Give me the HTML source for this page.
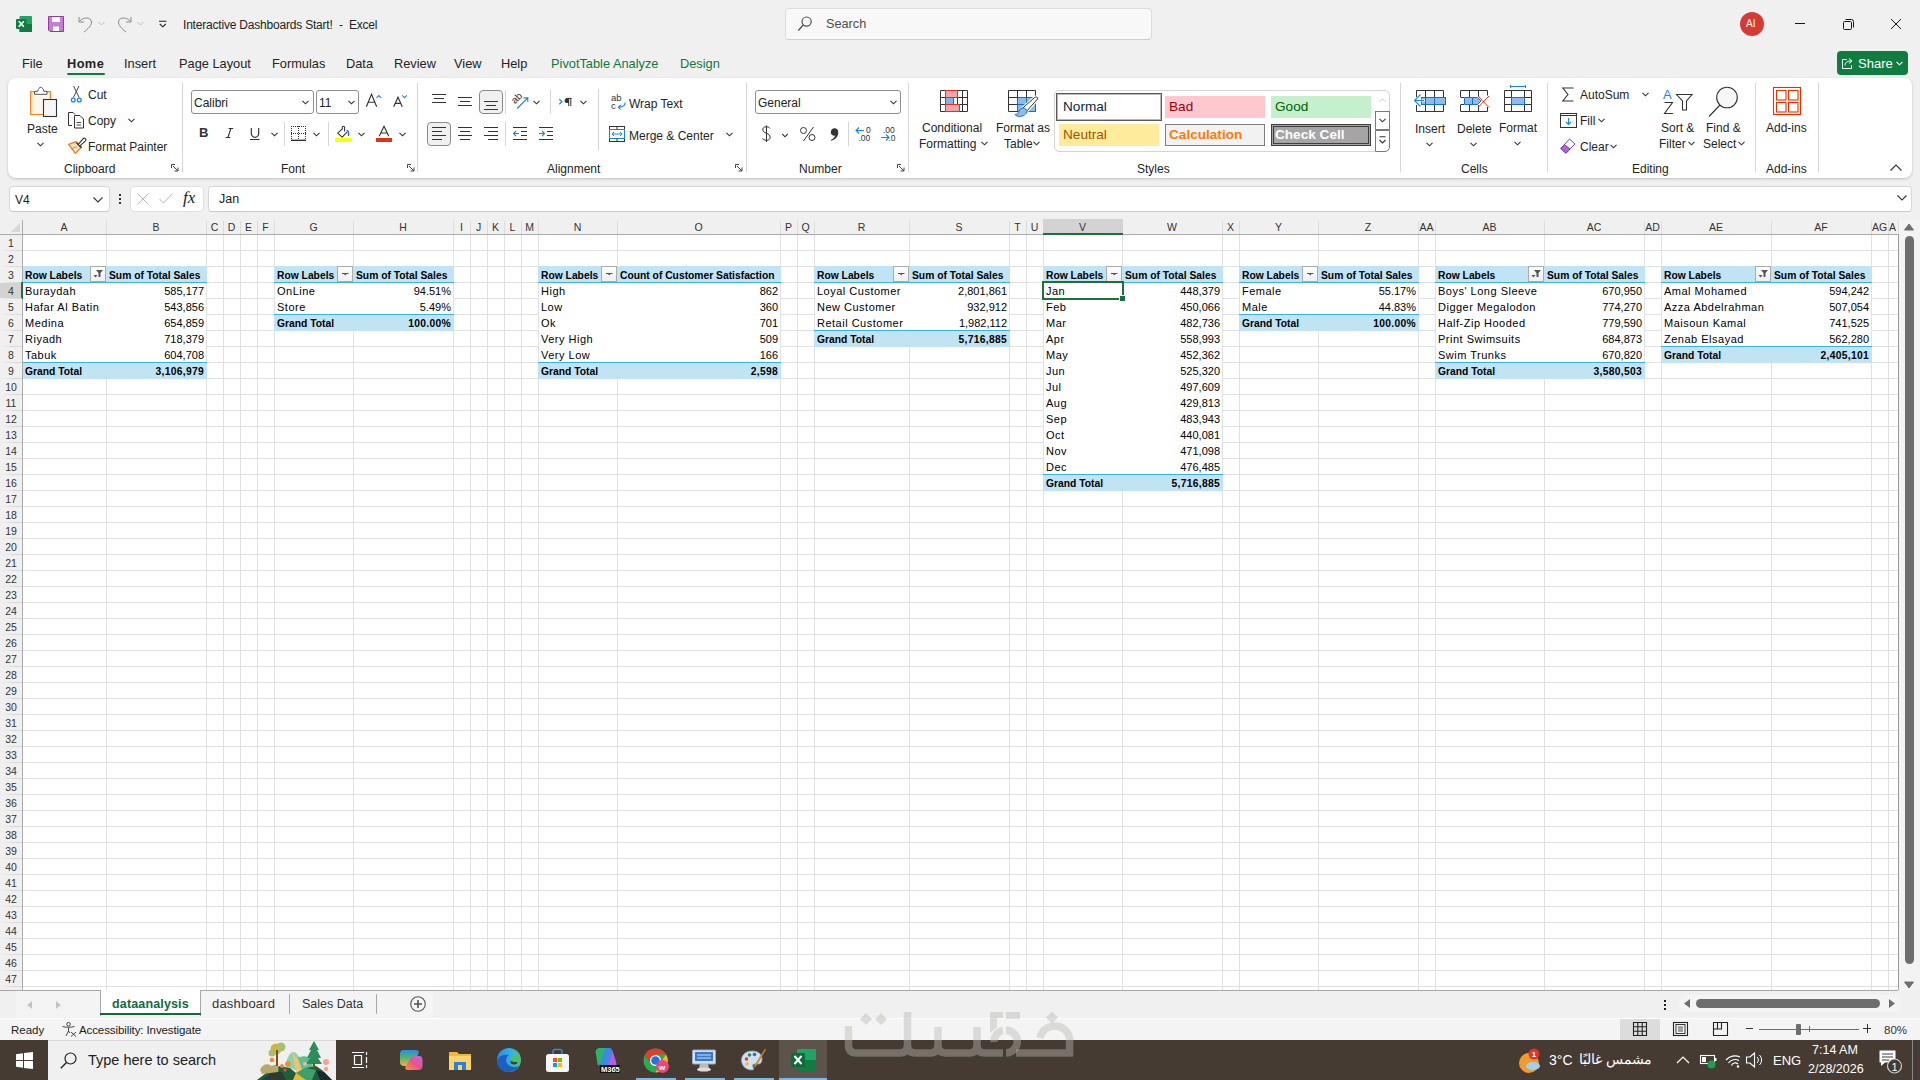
<!DOCTYPE html>
<html><head><meta charset="utf-8"><title>Excel</title>
<style>
*{box-sizing:border-box;margin:0;padding:0}
html,body{width:1920px;height:1080px;overflow:hidden;background:#f0f0f0;font-family:"Liberation Sans",sans-serif;color:#242424}
#root{position:relative;width:1920px;height:1080px;overflow:hidden}
.a{position:absolute}
.t{position:absolute;white-space:nowrap;line-height:1}
svg{position:absolute;overflow:visible}
.ch{font-size:10.5px;color:#333;text-align:center;overflow:hidden}
.rh{font-size:10.5px;color:#333;text-align:center}
.cr{font-size:11px;color:#000;letter-spacing:0.5px}
.cb{font-size:10.3px;font-weight:700;color:#000}
.nr{text-align:right;letter-spacing:0}
.bn{letter-spacing:0.3px}

</style></head><body>
<div id="root">
<!-- title bar -->
<svg style="left:16px;top:16px" width="16" height="16" viewBox="0 0 16 16">
  <rect x="3.5" y="0" width="12.5" height="16" rx="1" fill="#21a366"/>
  <rect x="3.5" y="8" width="12.5" height="8" fill="#107c41"/>
  <rect x="0" y="3" width="10.5" height="10" rx="1" fill="#107c41"/>
  <path d="M2.8 5.2 L7.8 10.8 M7.8 5.2 L2.8 10.8" stroke="#fff" stroke-width="1.7"/>
</svg>
<svg style="left:48px;top:16px" width="16" height="16" viewBox="0 0 16 16">
  <path d="M0.5 0.5 H15.5 V15.5 H2 L0.5 14 Z" fill="#c77ed6" stroke="#8e3b9e" stroke-width="1"/>
  <rect x="4" y="1" width="8" height="5" fill="#fff"/>
  <rect x="5" y="10.5" width="6" height="4.5" fill="#fff"/>
</svg>
<svg style="left:78px;top:16px" width="16" height="16" viewBox="0 0 16 16">
  <path d="M1 1 V6 H6 M1.5 5.5 C4 1.5 13 0 13.5 6 C13.8 9 10 13 6 16" fill="none" stroke="#8a8a8a" stroke-width="1"/>
</svg>
<svg style="left:98px;top:21px" width="7" height="5" viewBox="0 0 7 5"><path d="M0.5 1 L3.5 4 L6.5 1" fill="none" stroke="#bdbdbd" stroke-width="1"/></svg>
<svg style="left:117px;top:16px" width="16" height="16" viewBox="0 0 16 16">
  <path d="M14 1 V6 H9 M13.5 5.5 C11 1.5 2 0 1.5 6 C1.2 9 5 13 9 16" fill="none" stroke="#8a8a8a" stroke-width="1"/>
</svg>
<svg style="left:137px;top:21px" width="7" height="5" viewBox="0 0 7 5"><path d="M0.5 1 L3.5 4 L6.5 1" fill="none" stroke="#bdbdbd" stroke-width="1"/></svg>
<svg style="left:159px;top:20px" width="8" height="8" viewBox="0 0 8 8"><path d="M0 1.2 H7.5 M0.8 4 L3.75 6.8 L6.7 4" fill="none" stroke="#242424" stroke-width="1.1"/></svg>
<div class="t" style="left:183px;top:19px;font-size:12px;color:#242424;letter-spacing:-0.2px">Interactive Dashboards Start!&nbsp;&nbsp;-&nbsp;&nbsp;Excel</div>
<!-- search -->
<div class="a" style="left:785px;top:8px;width:367px;height:32px;background:#f8f8f8;border:1px solid #dcdcdc;border-radius:4px;border-bottom-color:#cfcfcf"></div>
<svg style="left:796px;top:15px" width="18" height="18" viewBox="796 15 18 18"><circle cx="806.6" cy="21.6" r="4.6" fill="none" stroke="#505050" stroke-width="1.2"/><path d="M803.3 25 L798.3 30.5" stroke="#505050" stroke-width="1.3"/></svg>
<div class="t" style="left:826px;top:18px;font-size:12.7px;color:#4d4d4d">Search</div>
<!-- avatar & window controls -->
<div class="a" style="left:1740px;top:12px;width:24px;height:24px;border-radius:50%;background:#d53a35"></div>
<div class="t" style="left:1746px;top:19px;font-size:10px;color:#fff">AI</div>
<div class="a" style="left:1795px;top:23px;width:10px;height:1px;background:#1a1a1a"></div>
<svg style="left:1843px;top:19px" width="11" height="11" viewBox="0 0 11 11"><rect x="0.5" y="2.5" width="8" height="8" rx="1.2" fill="none" stroke="#1a1a1a" stroke-width="1"/><path d="M2.5 0.5 H8.5 A2 2 0 0 1 10.5 2.5 V8.5" fill="none" stroke="#1a1a1a" stroke-width="1"/></svg>
<svg style="left:1891px;top:19px" width="10" height="10" viewBox="0 0 10 10"><path d="M0 0 L10 10 M10 0 L0 10" stroke="#1a1a1a" stroke-width="1"/></svg>
<!-- tabs -->
<div class="t" style="left:22px;top:58px;font-size:12.8px">File</div>
<div class="t" style="left:67px;top:58px;font-size:12.8px;font-weight:700;letter-spacing:0.4px">Home</div>
<div class="a" style="left:67px;top:73px;width:38px;height:2px;border-radius:1px;background:#107c41"></div>
<div class="t" style="left:124px;top:58px;font-size:12.8px">Insert</div>
<div class="t" style="left:179px;top:58px;font-size:12.8px">Page Layout</div>
<div class="t" style="left:272px;top:58px;font-size:12.8px">Formulas</div>
<div class="t" style="left:346px;top:58px;font-size:12.8px">Data</div>
<div class="t" style="left:394px;top:58px;font-size:12.8px">Review</div>
<div class="t" style="left:454px;top:58px;font-size:12.8px">View</div>
<div class="t" style="left:501px;top:58px;font-size:12.8px">Help</div>
<div class="t" style="left:551px;top:58px;font-size:12.8px;color:#0e7a3b">PivotTable Analyze</div>
<div class="t" style="left:680px;top:58px;font-size:12.8px;color:#0e7a3b">Design</div>
<!-- share -->
<div class="a" style="left:1837px;top:51px;width:71px;height:24px;border-radius:4px;background:#117c3f"></div>
<svg style="left:1842px;top:57px" width="12" height="12" viewBox="0 0 12 12"><path d="M5 2.5 H0.5 V11.5 H9.5 V8" fill="none" stroke="#fff" stroke-width="1"/><path d="M3 8.5 C3 5 6 4 9 4 M7 1.5 L10 4 L7 6.5" fill="none" stroke="#fff" stroke-width="1"/></svg>
<div class="t" style="left:1858px;top:57px;font-size:13px;color:#fff">Share</div>
<svg style="left:1896px;top:61px" width="7" height="5" viewBox="0 0 7 5"><path d="M0.5 0.8 L3.5 3.8 L6.5 0.8" fill="none" stroke="#fff" stroke-width="1.1"/></svg>

<!-- ribbon panel -->
<div class="a" style="left:8px;top:78px;width:1904px;height:100px;background:#fff;border-radius:8px;box-shadow:0 1px 3px rgba(0,0,0,0.2)"></div>
<!-- separators -->
<div class="a" style="left:182px;top:83px;width:1px;height:89px;background:#d6d6d6"></div>
<div class="a" style="left:417px;top:83px;width:1px;height:89px;background:#d6d6d6"></div>
<div class="a" style="left:746px;top:83px;width:1px;height:89px;background:#d6d6d6"></div>
<div class="a" style="left:908px;top:83px;width:1px;height:89px;background:#d6d6d6"></div>
<div class="a" style="left:1400px;top:83px;width:1px;height:89px;background:#d6d6d6"></div>
<div class="a" style="left:1547px;top:83px;width:1px;height:89px;background:#d6d6d6"></div>
<div class="a" style="left:1755px;top:83px;width:1px;height:89px;background:#d6d6d6"></div>
<div class="a" style="left:1818px;top:83px;width:1px;height:89px;background:#d6d6d6"></div>
<!-- group labels -->
<div class="t" style="left:64px;top:163px;font-size:12px">Clipboard</div>
<div class="t" style="left:281px;top:163px;font-size:12px">Font</div>
<div class="t" style="left:547px;top:163px;font-size:12px">Alignment</div>
<div class="t" style="left:799px;top:163px;font-size:12px">Number</div>
<div class="t" style="left:1137px;top:163px;font-size:12px">Styles</div>
<div class="t" style="left:1461px;top:163px;font-size:12px">Cells</div>
<div class="t" style="left:1632px;top:163px;font-size:12px">Editing</div>
<div class="t" style="left:1766px;top:163px;font-size:12px">Add-ins</div>
<!-- dialog launchers -->
<svg style="left:171px;top:164px" width="8" height="8" viewBox="0 0 8 8"><path d="M0.5 4 V0.5 H4 M2 2 L7 7 M7 3.5 V7 H3.5" fill="none" stroke="#444" stroke-width="1"/></svg>
<svg style="left:407px;top:164px" width="8" height="8" viewBox="0 0 8 8"><path d="M0.5 4 V0.5 H4 M2 2 L7 7 M7 3.5 V7 H3.5" fill="none" stroke="#444" stroke-width="1"/></svg>
<svg style="left:735px;top:164px" width="8" height="8" viewBox="0 0 8 8"><path d="M0.5 4 V0.5 H4 M2 2 L7 7 M7 3.5 V7 H3.5" fill="none" stroke="#444" stroke-width="1"/></svg>
<svg style="left:897px;top:164px" width="8" height="8" viewBox="0 0 8 8"><path d="M0.5 4 V0.5 H4 M2 2 L7 7 M7 3.5 V7 H3.5" fill="none" stroke="#444" stroke-width="1"/></svg>

<!-- CLIPBOARD -->
<svg style="left:28px;top:85px" width="32" height="34" viewBox="28 85 32 34">
  <path d="M43.5 114.5 H30.6 V91.6 H50.4 V99" fill="#fdf6ea" stroke="#f08a1c" stroke-width="1.2"/>
  <path d="M32 113 V93 H49" fill="none" stroke="#fcd9a8" stroke-width="1"/>
  <path d="M34.5 94.3 V91.3 H37.8 C38.3 88.5 39.5 87.3 40.8 87.3 C42.1 87.3 43.3 88.5 43.8 91.3 H47 V94.3 Z" fill="#fff" stroke="#555" stroke-width="1"/>
  <rect x="43.5" y="99.5" width="13" height="17" fill="#f6f6f6" stroke="#333" stroke-width="1.1"/>
</svg>
<div class="t" style="left:27px;top:123px;font-size:12px">Paste</div>
<svg style="left:37px;top:142px" width="7" height="5" viewBox="0 0 7 5"><path d="M0.5 0.8 L3.5 3.8 L6.5 0.8" fill="none" stroke="#333" stroke-width="1.1"/></svg>
<svg style="left:69px;top:85px" width="14" height="19" viewBox="69 85 14 19">
  <path d="M73.6 86 L79.2 97.6 M79 86 L73.4 97.6" stroke="#444" stroke-width="1"/>
  <circle cx="73.3" cy="100" r="1.9" fill="none" stroke="#1a86d9" stroke-width="1.3"/><circle cx="79.3" cy="100" r="1.9" fill="none" stroke="#1a86d9" stroke-width="1.3"/>
</svg>
<div class="t" style="left:88px;top:89px;font-size:12px">Cut</div>
<svg style="left:68px;top:112px" width="17" height="17" viewBox="0 0 17 17">
  <path d="M4 13.5 H0.5 V0.5 H5 L7 2.5" fill="none" stroke="#333" stroke-width="1"/>
  <path d="M6.5 16 V3.5 H12 L15.5 7 V16 Z" fill="#fff" stroke="#333" stroke-width="1"/>
  <path d="M8.5 10.5 H13 M8.5 13 H13" stroke="#333" stroke-width="0.9"/>
</svg>
<div class="t" style="left:88px;top:115px;font-size:12px">Copy</div>
<svg style="left:128px;top:118px" width="7" height="5" viewBox="0 0 7 5"><path d="M0.5 0.8 L3.5 3.8 L6.5 0.8" fill="none" stroke="#333" stroke-width="1.1"/></svg>
<svg style="left:67px;top:136px" width="20" height="19" viewBox="67 136 20 19">
  <path d="M68.6 144.4 L76.4 141.6 L81.4 147 L75.4 153.4 Z" fill="#fde3c5" stroke="#e8791f" stroke-width="1.2" stroke-linejoin="round"/>
  <path d="M71.5 148.8 L76.8 146.6" stroke="#e8791f" stroke-width="1"/>
  <path d="M78 144.6 L83.2 138.6 C83.7 138 84.5 138 85 138.5 L85.6 139.1 C86.1 139.6 86.1 140.4 85.5 140.9 L79.6 146.2" fill="#fff" stroke="#333" stroke-width="1.1"/>
  <path d="M76.2 142.6 L81.4 147.8" stroke="#333" stroke-width="1.3"/>
</svg>
<div class="t" style="left:88px;top:141px;font-size:12px">Format Painter</div>

<!-- FONT -->
<div class="a" style="left:191px;top:90px;width:123px;height:24px;border:1px solid #8f8f8f;border-radius:3px"></div>
<div class="t" style="left:194px;top:97px;font-size:12px;color:#222">Calibri</div>
<svg style="left:302px;top:100px" width="7" height="5" viewBox="0 0 7 5"><path d="M0.5 0.8 L3.5 3.8 L6.5 0.8" fill="none" stroke="#333" stroke-width="1.1"/></svg>
<div class="a" style="left:316px;top:90px;width:43px;height:24px;border:1px solid #8f8f8f;border-radius:3px"></div>
<div class="t" style="left:319px;top:97px;font-size:12px;color:#222">11</div>
<svg style="left:348px;top:100px" width="7" height="5" viewBox="0 0 7 5"><path d="M0.5 0.8 L3.5 3.8 L6.5 0.8" fill="none" stroke="#333" stroke-width="1.1"/></svg>
<svg style="left:362px;top:90px" width="50" height="20" viewBox="362 90 50 20">
  <path d="M366.3 106.8 L371.5 94.3 L376.7 106.8 M368.2 102.2 H374.8" fill="none" stroke="#333" stroke-width="1.15"/>
  <path d="M376.5 97.8 L378.8 95.5 L381.1 97.8" fill="none" stroke="#1a86d9" stroke-width="1.1"/>
  <path d="M393.7 106.8 L398 97.2 L402.3 106.8 M395.2 103.3 H400.8" fill="none" stroke="#333" stroke-width="1.15"/>
  <path d="M402.2 95.3 L404.5 97.6 L406.8 95.3" fill="none" stroke="#1a86d9" stroke-width="1.1"/>
</svg>
<div class="t" style="left:199px;top:126px;font-size:13px;font-weight:700;color:#333">B</div>
<svg style="left:222px;top:125px" width="40" height="17" viewBox="222 125 40 17">
  <path d="M228.6 128.5 H233.2 M225.6 137.5 H230.2 M230.9 128.5 L227.9 137.5" fill="none" stroke="#333" stroke-width="1.1"/>
  <path d="M251.3 128 V133.6 A3.7 3.7 0 0 0 258.7 133.6 V128" fill="none" stroke="#333" stroke-width="1.15"/>
  <path d="M250 139.5 H259.5" stroke="#333" stroke-width="1"/>
</svg>
<svg style="left:271px;top:132px" width="7" height="5" viewBox="0 0 7 5"><path d="M0.5 0.8 L3.5 3.8 L6.5 0.8" fill="none" stroke="#333" stroke-width="1.1"/></svg>
<div class="a" style="left:284px;top:122px;width:1px;height:24px;background:#d6d6d6"></div>
<svg style="left:290px;top:125px" width="18" height="17" viewBox="290 125 18 17">
  <path d="M291 126.5 H306 M291 133.5 H306 M291.5 126 V140 M298.5 126 V140 M305.5 126 V140" fill="none" stroke="#333" stroke-width="1" stroke-dasharray="1 1"/>
  <path d="M291 140.3 H306" stroke="#222" stroke-width="1.3"/>
</svg>
<svg style="left:313px;top:132px" width="7" height="5" viewBox="0 0 7 5"><path d="M0.5 0.8 L3.5 3.8 L6.5 0.8" fill="none" stroke="#333" stroke-width="1.1"/></svg>
<div class="a" style="left:328px;top:122px;width:1px;height:24px;background:#d6d6d6"></div>
<svg style="left:334px;top:124px" width="18" height="19" viewBox="334 124 18 19">
  <path d="M344.6 131.6 V127.4 A1.15 1.15 0 0 0 342.3 127.4 V128.9 L337.7 133.2 L342.2 137.2 L347 132.2" fill="none" stroke="#333" stroke-width="1.1" stroke-linejoin="round"/>
  <path d="M346.6 130.2 C348.3 130.6 348.9 132.6 348.5 135.8" fill="none" stroke="#1a6fd0" stroke-width="1.5"/>
  <rect x="335" y="137.8" width="16" height="4.2" fill="#ffff00"/>
</svg>
<svg style="left:358px;top:132px" width="7" height="5" viewBox="0 0 7 5"><path d="M0.5 0.8 L3.5 3.8 L6.5 0.8" fill="none" stroke="#333" stroke-width="1.1"/></svg>
<svg style="left:376px;top:124px" width="16" height="14" viewBox="376 124 16 14"><path d="M379.2 136.3 L384 126.3 L388.8 136.3 M380.8 133 H387.2" fill="none" stroke="#333" stroke-width="1.15"/></svg>
<div class="a" style="left:376px;top:138px;width:16px;height:4px;background:#e0311b"></div>
<svg style="left:399px;top:132px" width="7" height="5" viewBox="0 0 7 5"><path d="M0.5 0.8 L3.5 3.8 L6.5 0.8" fill="none" stroke="#333" stroke-width="1.1"/></svg>

<!-- ALIGNMENT -->
<svg style="left:432px;top:93px" width="15" height="11" viewBox="0 0 15 11"><path d="M0 1.5 H14 M2 5.5 H12 M0 9.5 H14" stroke="#333" stroke-width="1"/></svg>
<svg style="left:458px;top:96px" width="15" height="11" viewBox="0 0 15 11"><path d="M0 1.5 H14 M2 5.5 H12 M0 9.5 H14" stroke="#333" stroke-width="1"/></svg>
<div class="a" style="left:479px;top:90px;width:24px;height:24px;border:1px solid #8a8a8a;border-radius:4px;background:#f0f0f0"></div>
<svg style="left:484px;top:100px" width="15" height="11" viewBox="0 0 15 11"><path d="M0 1.5 H14 M2 5.5 H12 M0 9.5 H14" stroke="#333" stroke-width="1"/></svg>
<div class="a" style="left:505px;top:90px;width:1px;height:24px;background:#d6d6d6"></div>
<svg style="left:508px;top:90px" width="24" height="22" viewBox="508 90 24 22">
  <text x="512.2" y="101.5" font-size="10" fill="#333" font-family="Liberation Sans" transform="rotate(-45 517 99.5)">ab</text>
  <path d="M517.2 108.5 L527.8 97.9 M523.6 97.9 H527.8 V102.1" fill="none" stroke="#1a86d9" stroke-width="1.1"/>
</svg>
<svg style="left:533px;top:100px" width="7" height="5" viewBox="0 0 7 5"><path d="M0.5 0.8 L3.5 3.8 L6.5 0.8" fill="none" stroke="#333" stroke-width="1.1"/></svg>
<div class="a" style="left:550px;top:90px;width:1px;height:24px;background:#d6d6d6"></div>
<svg style="left:556px;top:96px" width="18" height="12" viewBox="556 96 18 12">
  <path d="M559.3 99.2 L562 101.7 L559.3 104.2" fill="none" stroke="#1a86d9" stroke-width="1.2"/>
  <path d="M565.8 98.4 H571.5 M568.7 98.4 V106 M570.8 98.4 V106" fill="none" stroke="#333" stroke-width="1"/>
  <path d="M568.7 98.4 H566.8 A2.3 2.3 0 0 0 566.8 103 H568.7 Z" fill="#333"/>
</svg>
<svg style="left:580px;top:100px" width="7" height="5" viewBox="0 0 7 5"><path d="M0.5 0.8 L3.5 3.8 L6.5 0.8" fill="none" stroke="#333" stroke-width="1.1"/></svg>
<div class="a" style="left:598px;top:89px;width:1px;height:61px;background:#d6d6d6"></div>
<div class="a" style="left:427px;top:122px;width:24px;height:24px;border:1px solid #8a8a8a;border-radius:4px;background:#f0f0f0"></div>
<svg style="left:432px;top:127px" width="15" height="14" viewBox="0 0 15 14"><path d="M0 0.5 H14 M0 4.5 H10 M0 8.5 H14 M0 12.5 H10" stroke="#333" stroke-width="1"/></svg>
<svg style="left:458px;top:127px" width="15" height="14" viewBox="0 0 15 14"><path d="M0 0.5 H14 M2 4.5 H12 M0 8.5 H14 M2 12.5 H12" stroke="#333" stroke-width="1"/></svg>
<svg style="left:484px;top:127px" width="15" height="14" viewBox="0 0 15 14"><path d="M0 0.5 H14 M4 4.5 H14 M0 8.5 H14 M4 12.5 H14" stroke="#333" stroke-width="1"/></svg>
<div class="a" style="left:505px;top:122px;width:1px;height:24px;background:#d6d6d6"></div>
<svg style="left:513px;top:127px" width="15" height="14" viewBox="0 0 15 14"><path d="M0 0.5 H14 M8 4.5 H14 M8 8.5 H14 M0 12.5 H14" stroke="#333" stroke-width="1"/><path d="M6 6.5 H0.5 M3 4 L0.5 6.5 L3 9" fill="none" stroke="#1a86d9" stroke-width="1.1"/></svg>
<svg style="left:539px;top:127px" width="15" height="14" viewBox="0 0 15 14"><path d="M0 0.5 H14 M8 4.5 H14 M8 8.5 H14 M0 12.5 H14" stroke="#333" stroke-width="1"/><path d="M0 6.5 H5.5 M3 4 L5.5 6.5 L3 9" fill="none" stroke="#1a86d9" stroke-width="1.1"/></svg>
<svg style="left:609px;top:92px" width="18" height="19" viewBox="609 92 18 19">
  <text x="611" y="101.3" font-size="9.5" fill="#333" font-family="Liberation Sans">ab</text>
  <text x="611" y="108.8" font-size="9.5" fill="#333" font-family="Liberation Sans">c</text>
  <path d="M625 102.5 C625.5 105.5 623 107 619 107.3 M620.8 105 L618.4 107.3 L620.8 109.6" fill="none" stroke="#1a86d9" stroke-width="1.1"/>
</svg>
<div class="t" style="left:629px;top:98px;font-size:12px">Wrap Text</div>
<svg style="left:609px;top:126px" width="16" height="16" viewBox="0 0 16 16">
  <rect x="0.5" y="0.5" width="15" height="15" fill="#fff" stroke="#333" stroke-width="1"/>
  <rect x="0.5" y="3.5" width="15" height="9" fill="#fff" stroke="#1a86d9" stroke-width="1"/>
  <path d="M8 0.5 V3.5 M8 12.5 V15.5" stroke="#333"/>
  <path d="M3 8 H13 M5 6 L3 8 L5 10 M11 6 L13 8 L11 10" fill="none" stroke="#1a86d9" stroke-width="1"/>
</svg>
<div class="t" style="left:629px;top:130px;font-size:12px">Merge &amp; Center</div>
<svg style="left:726px;top:132px" width="7" height="5" viewBox="0 0 7 5"><path d="M0.5 0.8 L3.5 3.8 L6.5 0.8" fill="none" stroke="#333" stroke-width="1.1"/></svg>

<!-- NUMBER -->
<div class="a" style="left:755px;top:90px;width:146px;height:24px;border:1px solid #8f8f8f;border-radius:3px"></div>
<div class="t" style="left:758px;top:97px;font-size:12px;color:#222">General</div>
<svg style="left:890px;top:100px" width="7" height="5" viewBox="0 0 7 5"><path d="M0.5 0.8 L3.5 3.8 L6.5 0.8" fill="none" stroke="#333" stroke-width="1.1"/></svg>
<svg style="left:755px;top:120px" width="150" height="28" viewBox="755 120 150 28">
  <path d="M770 128.5 C769 127 767.5 126.8 766 126.8 C763.5 126.8 762.5 128.5 762.8 130.2 C763.3 132.5 766.5 133 768 134 C770 135 770.5 136.8 770 138.3 C769.3 140 767.5 140.5 766 140.3 C764.5 140.2 763.5 139.5 762.5 138.5 M766.5 125.5 V142" fill="none" stroke="#333" stroke-width="1"/>
  <path d="M782.3 134 L785 136.8 L787.7 134" fill="none" stroke="#333" stroke-width="1.1"/>
  <circle cx="803.5" cy="130.5" r="3" fill="none" stroke="#333" stroke-width="1"/><circle cx="812" cy="137.5" r="3" fill="none" stroke="#333" stroke-width="1"/><path d="M813.5 127 L803.5 141" stroke="#333" stroke-width="1"/>
  <path d="M834.5 128.3 C837 128.3 838.3 130.2 838.3 132.5 C838.3 136.5 835.5 139.5 831.2 140.8 L830.8 140 C833.5 138.8 834.8 137.2 835 135.8 C832.5 136 830.8 134.5 830.8 132.2 C830.8 130 832.3 128.3 834.5 128.3 Z" fill="#333"/>
  <path d="M864 130.5 H856 M859 127.5 L856 130.5 L859 133.5" fill="none" stroke="#1a86d9" stroke-width="1.1"/>
  <text x="866" y="133" font-size="8.5" fill="#333" font-family="Liberation Sans">0</text>
  <text x="858.5" y="141" font-size="8.5" fill="#333" font-family="Liberation Sans">.00</text>
  <text x="883" y="133" font-size="8.5" fill="#333" font-family="Liberation Sans">.00</text>
  <path d="M881 137.5 H889 M886 134.5 L889 137.5 L886 140.5" fill="none" stroke="#1a86d9" stroke-width="1.1"/>
  <text x="888.5" y="141" font-size="8.5" fill="#333" font-family="Liberation Sans">.0</text>
</svg>
<div class="a" style="left:848px;top:122px;width:1px;height:24px;background:#d6d6d6"></div>

<!-- STYLES -->
<svg style="left:938px;top:88px" width="32" height="26" viewBox="938 88 32 26">
  <path d="M940.5 90.5 H967.5 V111.5 H940.5 Z M940.5 97.5 H967.5 M940.5 104.5 H967.5 M945.5 90.5 V111.5 M957.5 90.5 V104.5 M962.5 90.5 V111.5 M959.5 104.5 V111.5" fill="none" stroke="#333" stroke-width="1"/>
  <rect x="945.5" y="90.5" width="12" height="7" fill="#f5a3a3" stroke="#e0302a" stroke-width="1"/>
  <rect x="945.5" y="97.5" width="8" height="7" fill="#7fb5ea" stroke="#1a6fc4" stroke-width="1"/>
  <rect x="945.5" y="104.5" width="14" height="7" fill="#f5a3a3" stroke="#e0302a" stroke-width="1"/>
</svg>
<div class="t" style="left:922px;top:122px;font-size:12px">Conditional</div>
<div class="t" style="left:919px;top:138px;font-size:12px">Formatting</div>
<svg style="left:981px;top:141px" width="7" height="5" viewBox="0 0 7 5"><path d="M0.5 0.8 L3.5 3.8 L6.5 0.8" fill="none" stroke="#333" stroke-width="1.1"/></svg>
<svg style="left:1006px;top:88px" width="34" height="31" viewBox="1006 88 34 31">
  <rect x="1017.5" y="97.5" width="18" height="14" fill="#8dbcec" stroke="#1a6fc4" stroke-width="1"/>
  <path d="M1026.5 97.5 V104.5 M1017.5 104.5 H1035.5" stroke="#1a6fc4" stroke-width="1"/>
  <path d="M1008.5 90.5 H1035.5 V97 M1008.5 90.5 V111.5 H1017.5 M1008.5 97.5 H1017.5 M1008.5 104.5 H1017.5 M1017.5 90.5 V97.5 M1026.5 90.5 V97.5" fill="none" stroke="#333" stroke-width="1"/>
  <path d="M1022.5 108.3 L1034.5 97.6 C1036 96.4 1038.3 97 1037.6 98.9 L1027.2 110.6 Z" fill="#fff" stroke="#fff" stroke-width="3"/>
  <path d="M1022.5 108.3 L1034.5 97.6 C1036 96.4 1038.3 97 1037.6 98.9 L1027.2 110.6 Z" fill="#fff" stroke="#333" stroke-width="1"/>
  <path d="M1027.2 110.6 C1026.8 114.2 1023.2 116.6 1019.2 116.4 C1017.2 116.3 1015.6 115.6 1015 114.6 C1017.6 114.6 1018.6 113 1019.1 111.1 C1019.6 108.6 1022 107.6 1024.2 108.1 Z" fill="#8dbcec" stroke="#1a6fc4" stroke-width="1"/>
</svg>
<div class="t" style="left:996px;top:122px;font-size:12px">Format as</div>
<div class="t" style="left:1004px;top:138px;font-size:12px">Table</div>
<svg style="left:1033px;top:141px" width="7" height="5" viewBox="0 0 7 5"><path d="M0.5 0.8 L3.5 3.8 L6.5 0.8" fill="none" stroke="#333" stroke-width="1.1"/></svg>
<div class="a" style="left:1054px;top:90px;width:336px;height:62px;border:1px solid #d4d4d4;border-radius:5px"></div>
<div class="a" style="left:1056px;top:93px;width:106px;height:28px;border:1px solid #5a5a5a;box-shadow:inset 0 0 0 1px #b8b8b8;background:#fff"></div>
<div class="t" style="left:1063px;top:100px;font-size:13.6px;color:#0b1f45">Normal</div>
<div class="a" style="left:1059px;top:124px;width:100px;height:22px;background:#ffeb9c"></div>
<div class="t" style="left:1063px;top:128px;font-size:13.6px;color:#9c5700">Neutral</div>
<div class="a" style="left:1165px;top:96px;width:100px;height:22px;background:#ffc7ce"></div>
<div class="t" style="left:1169px;top:100px;font-size:13.6px;color:#9c0006">Bad</div>
<div class="a" style="left:1271px;top:96px;width:100px;height:22px;background:#c6efce"></div>
<div class="t" style="left:1275px;top:100px;font-size:13.6px;color:#006100">Good</div>
<div class="a" style="left:1165px;top:124px;width:100px;height:22px;background:#f2f2f2;border:1px solid #7f7f7f"></div>
<div class="t" style="left:1169px;top:128px;font-size:13.6px;font-weight:700;color:#fa7d00">Calculation</div>
<div class="a" style="left:1271px;top:124px;width:100px;height:22px;background:#a5a5a5;border:3px double #3f3f3f"></div>
<div class="t" style="left:1275px;top:128px;font-size:13.6px;font-weight:700;color:#fff">Check Cell</div>
<div class="a" style="left:1375px;top:111px;width:15px;height:19px;border:1px solid #7a7a7a;border-radius:0 0 0 0;background:#fff"></div>
<div class="a" style="left:1375px;top:130px;width:15px;height:22px;border:1px solid #7a7a7a;border-radius:0 0 5px 0;background:#fff"></div>
<svg style="left:1379px;top:98px" width="7" height="5" viewBox="0 0 7 5"><path d="M0.5 3.8 L3.5 0.8 L6.5 3.8" fill="none" stroke="#c8c8c8" stroke-width="1"/></svg>
<svg style="left:1379px;top:118px" width="7" height="5" viewBox="0 0 7 5"><path d="M0.5 0.8 L3.5 3.8 L6.5 0.8" fill="none" stroke="#333" stroke-width="1.1"/></svg>
<svg style="left:1379px;top:136px" width="7" height="9" viewBox="0 0 7 9"><path d="M0.5 0.8 H6.5 M0.5 4 L3.5 7 L6.5 4" fill="none" stroke="#333" stroke-width="1.1"/></svg>

<!-- CELLS -->
<svg style="left:1410px;top:86px" width="40" height="30" viewBox="1410 86 40 30">
  <path d="M1416.5 97 V90.5 H1443.5 V111.5 H1416.5 V105 M1425.5 90.5 V97 M1434.5 90.5 V97 M1425.5 105 V111.5 M1434.5 105 V111.5" fill="none" stroke="#333" stroke-width="1"/>
  <rect x="1421.5" y="97.5" width="24" height="7" fill="#8dbcec" stroke="#1a6fc4" stroke-width="1"/>
  <path d="M1425.5 97.5 V104.5 M1434.5 97.5 V104.5" stroke="#1a6fc4" stroke-width="1"/>
  <rect x="1417" y="99.5" width="8" height="2" fill="#fff"/>
  <path d="M1424 100.5 H1415 M1420.5 94.5 L1414.5 100.5 L1420.5 106.5" fill="none" stroke="#1a86d9" stroke-width="1.1"/>
</svg>
<div class="t" style="left:1415px;top:123px;font-size:12px">Insert</div>
<svg style="left:1426px;top:142px" width="7" height="5" viewBox="0 0 7 5"><path d="M0.5 0.8 L3.5 3.8 L6.5 0.8" fill="none" stroke="#333" stroke-width="1.1"/></svg>
<svg style="left:1458px;top:86px" width="34" height="30" viewBox="1458 86 34 30">
  <path d="M1460.5 97 V90.5 H1487.5 V95.5 M1487.5 107 V111.5 H1460.5 V105 M1460.5 97.5 H1464 M1460.5 104.5 H1464 M1469.5 90.5 V97 M1478.5 90.5 V97 M1469.5 105 V111.5 M1478.5 105 V111.5" fill="none" stroke="#333" stroke-width="1"/>
  <path d="M1464.5 97.5 H1477.5 L1481 101 L1477.5 104.5 H1464.5 Z" fill="#8dbcec" stroke="#1a6fc4" stroke-width="1"/>
  <path d="M1472.5 97.5 V104.5" stroke="#1a6fc4" stroke-width="1"/>
  <path d="M1478 96 L1489 107.5 M1489 96 L1478 107.5" stroke="#e0302a" stroke-width="1"/>
</svg>
<div class="t" style="left:1457px;top:123px;font-size:12px">Delete</div>
<svg style="left:1470px;top:142px" width="7" height="5" viewBox="0 0 7 5"><path d="M0.5 0.8 L3.5 3.8 L6.5 0.8" fill="none" stroke="#333" stroke-width="1.1"/></svg>
<svg style="left:1502px;top:84px" width="32" height="30" viewBox="1502 84 32 30">
  <path d="M1510.5 86.5 H1525.5 M1510.5 85 V88 M1525.5 85 V88" fill="none" stroke="#1a86d9" stroke-width="1"/>
  <path d="M1504.5 90.5 H1531.5 V111.5 H1504.5 Z M1504.5 97.5 H1531.5 M1504.5 104.5 H1531.5 M1511.5 90.5 V111.5 M1524.5 90.5 V111.5" fill="none" stroke="#333" stroke-width="1"/>
  <rect x="1511.5" y="97.5" width="13" height="7" fill="#8dbcec" stroke="#1a6fc4" stroke-width="1"/>
</svg>
<div class="t" style="left:1499px;top:122px;font-size:12px">Format</div>
<svg style="left:1514px;top:141px" width="7" height="5" viewBox="0 0 7 5"><path d="M0.5 0.8 L3.5 3.8 L6.5 0.8" fill="none" stroke="#333" stroke-width="1.1"/></svg>

<!-- EDITING -->
<svg style="left:1562px;top:87px" width="12" height="15" viewBox="0 0 12 15"><path d="M11.5 1 H0.8 L6 7.5 L0.8 14 H11.5" fill="none" stroke="#333" stroke-width="1.1"/></svg>
<div class="t" style="left:1580px;top:89px;font-size:12px">AutoSum</div>
<svg style="left:1642px;top:92px" width="7" height="5" viewBox="0 0 7 5"><path d="M0.5 0.8 L3.5 3.8 L6.5 0.8" fill="none" stroke="#333" stroke-width="1.1"/></svg>
<svg style="left:1560px;top:113px" width="17" height="15" viewBox="0 0 17 15"><rect x="0.5" y="0.5" width="16" height="14" fill="#fff" stroke="#333"/><path d="M0.5 2.5 H16.5" stroke="#333"/><path d="M8.5 5 V11.5 M6 9 L8.5 11.5 L11 9" fill="none" stroke="#1a86d9" stroke-width="1.1"/></svg>
<div class="t" style="left:1580px;top:115px;font-size:12px">Fill</div>
<svg style="left:1598px;top:118px" width="7" height="5" viewBox="0 0 7 5"><path d="M0.5 0.8 L3.5 3.8 L6.5 0.8" fill="none" stroke="#333" stroke-width="1.1"/></svg>
<svg style="left:1560px;top:138px" width="16" height="16" viewBox="0 0 16 16"><path d="M0.8 10.5 L9.5 1 L15 6 L6 15.2 Z" fill="#fff" stroke="#7a3fa0" stroke-width="1"/><path d="M0.8 10.5 L4.5 6.5 L10 11 L6 15.2 Z" fill="#b266d6" stroke="#7a3fa0" stroke-width="1"/></svg>
<div class="t" style="left:1580px;top:141px;font-size:12px">Clear</div>
<svg style="left:1610px;top:144px" width="7" height="5" viewBox="0 0 7 5"><path d="M0.5 0.8 L3.5 3.8 L6.5 0.8" fill="none" stroke="#333" stroke-width="1.1"/></svg>
<svg style="left:1663px;top:87px" width="31" height="28" viewBox="0 0 31 28">
  <text x="0" y="11.5" font-size="13" fill="#1a86d9" font-family="Liberation Sans">A</text>
  <path d="M1.5 15.5 H9.5 L1.5 26.5 H10" fill="none" stroke="#333" stroke-width="1.1"/>
  <path d="M13.5 7.5 H29 L23.5 14 V23 H19.5 V14 Z" fill="#fff" stroke="#333" stroke-width="1.1"/>
</svg>
<div class="t" style="left:1661px;top:122px;font-size:12px">Sort &amp;</div>
<div class="t" style="left:1659px;top:138px;font-size:12px">Filter</div>
<svg style="left:1688px;top:141px" width="7" height="5" viewBox="0 0 7 5"><path d="M0.5 0.8 L3.5 3.8 L6.5 0.8" fill="none" stroke="#333" stroke-width="1.1"/></svg>
<svg style="left:1705px;top:84px" width="36" height="34" viewBox="1705 84 36 34"><circle cx="1727" cy="97.5" r="10.3" fill="#f7f7f7" stroke="#333" stroke-width="1.1"/><path d="M1720 105 L1709 116.5" stroke="#333" stroke-width="1.1"/></svg>
<div class="t" style="left:1706px;top:122px;font-size:12px">Find &amp;</div>
<div class="t" style="left:1703px;top:138px;font-size:12px">Select</div>
<svg style="left:1738px;top:141px" width="7" height="5" viewBox="0 0 7 5"><path d="M0.5 0.8 L3.5 3.8 L6.5 0.8" fill="none" stroke="#333" stroke-width="1.1"/></svg>

<!-- ADD-INS -->
<svg style="left:1773px;top:87px" width="28" height="28" viewBox="0 0 28 28"><g fill="none" stroke="#dd3405" stroke-width="1.1"><rect x="0.5" y="0.5" width="27" height="27"/><rect x="3.5" y="3.5" width="9.5" height="9.5"/><rect x="15.5" y="3.5" width="9.5" height="9.5"/><rect x="3.5" y="15.5" width="9.5" height="9.5"/><rect x="15.5" y="15.5" width="9.5" height="9.5"/></g></svg>
<div class="t" style="left:1766px;top:122px;font-size:12px">Add-ins</div>
<svg style="left:1890px;top:164px" width="12" height="7" viewBox="0 0 12 7"><path d="M0.5 6.5 L6 1 L11.5 6.5" fill="none" stroke="#333" stroke-width="1.1"/></svg>

<!-- formula bar -->
<div class="a" style="left:9px;top:186px;width:101px;height:26px;background:#fff;border:1px solid #d8d8d8;border-radius:4px;border-bottom-color:#c8c8c8"></div>
<div class="t" style="left:15px;top:194px;font-size:12px;color:#222">V4</div>
<svg style="left:93px;top:197px" width="10" height="6" viewBox="0 0 10 6"><path d="M0.5 0.5 L5 5 L9.5 0.5" fill="none" stroke="#333" stroke-width="1.1"/></svg>
<div class="a" style="left:119px;top:194px;width:2px;height:2px;background:#333"></div>
<div class="a" style="left:119px;top:198px;width:2px;height:2px;background:#333"></div>
<div class="a" style="left:119px;top:202px;width:2px;height:2px;background:#333"></div>
<div class="a" style="left:130px;top:186px;width:74px;height:26px;background:#fff;border:1px solid #e0e0e0;border-radius:4px"></div>
<svg style="left:137px;top:193px" width="12" height="12" viewBox="0 0 12 12"><path d="M0.5 0.5 L11.5 11.5 M11.5 0.5 L0.5 11.5" stroke="#b8b8b8" stroke-width="1"/></svg>
<svg style="left:159px;top:193px" width="14" height="11" viewBox="0 0 14 11"><path d="M0.5 6 L4.5 10 L13.5 0.5" fill="none" stroke="#b8b8b8" stroke-width="1"/></svg>
<div class="t" style="left:183px;top:189px;font-size:17px;font-style:italic;font-family:'Liberation Serif',serif;color:#222">fx</div>
<div class="a" style="left:208px;top:186px;width:1704px;height:26px;background:#fff;border:1px solid #d8d8d8;border-radius:4px;border-bottom-color:#c8c8c8"></div>
<div class="t" style="left:219px;top:193px;font-size:12.5px;color:#222">Jan</div>
<svg style="left:1897px;top:195px" width="10" height="6" viewBox="0 0 10 6"><path d="M0.5 0.5 L5 5 L9.5 0.5" fill="none" stroke="#333" stroke-width="1.1"/></svg>

<div class="a" style="left:23px;top:235px;width:1875px;height:755px;background:#fff"></div>
<div class="a" style="left:23px;top:250px;width:1875px;height:1px;background:#e1e1e1"></div>
<div class="a" style="left:23px;top:266px;width:1875px;height:1px;background:#e1e1e1"></div>
<div class="a" style="left:23px;top:282px;width:1875px;height:1px;background:#e1e1e1"></div>
<div class="a" style="left:23px;top:298px;width:1875px;height:1px;background:#e1e1e1"></div>
<div class="a" style="left:23px;top:314px;width:1875px;height:1px;background:#e1e1e1"></div>
<div class="a" style="left:23px;top:330px;width:1875px;height:1px;background:#e1e1e1"></div>
<div class="a" style="left:23px;top:346px;width:1875px;height:1px;background:#e1e1e1"></div>
<div class="a" style="left:23px;top:362px;width:1875px;height:1px;background:#e1e1e1"></div>
<div class="a" style="left:23px;top:378px;width:1875px;height:1px;background:#e1e1e1"></div>
<div class="a" style="left:23px;top:394px;width:1875px;height:1px;background:#e1e1e1"></div>
<div class="a" style="left:23px;top:410px;width:1875px;height:1px;background:#e1e1e1"></div>
<div class="a" style="left:23px;top:426px;width:1875px;height:1px;background:#e1e1e1"></div>
<div class="a" style="left:23px;top:442px;width:1875px;height:1px;background:#e1e1e1"></div>
<div class="a" style="left:23px;top:458px;width:1875px;height:1px;background:#e1e1e1"></div>
<div class="a" style="left:23px;top:474px;width:1875px;height:1px;background:#e1e1e1"></div>
<div class="a" style="left:23px;top:490px;width:1875px;height:1px;background:#e1e1e1"></div>
<div class="a" style="left:23px;top:506px;width:1875px;height:1px;background:#e1e1e1"></div>
<div class="a" style="left:23px;top:522px;width:1875px;height:1px;background:#e1e1e1"></div>
<div class="a" style="left:23px;top:538px;width:1875px;height:1px;background:#e1e1e1"></div>
<div class="a" style="left:23px;top:554px;width:1875px;height:1px;background:#e1e1e1"></div>
<div class="a" style="left:23px;top:570px;width:1875px;height:1px;background:#e1e1e1"></div>
<div class="a" style="left:23px;top:586px;width:1875px;height:1px;background:#e1e1e1"></div>
<div class="a" style="left:23px;top:602px;width:1875px;height:1px;background:#e1e1e1"></div>
<div class="a" style="left:23px;top:618px;width:1875px;height:1px;background:#e1e1e1"></div>
<div class="a" style="left:23px;top:634px;width:1875px;height:1px;background:#e1e1e1"></div>
<div class="a" style="left:23px;top:650px;width:1875px;height:1px;background:#e1e1e1"></div>
<div class="a" style="left:23px;top:666px;width:1875px;height:1px;background:#e1e1e1"></div>
<div class="a" style="left:23px;top:682px;width:1875px;height:1px;background:#e1e1e1"></div>
<div class="a" style="left:23px;top:698px;width:1875px;height:1px;background:#e1e1e1"></div>
<div class="a" style="left:23px;top:714px;width:1875px;height:1px;background:#e1e1e1"></div>
<div class="a" style="left:23px;top:730px;width:1875px;height:1px;background:#e1e1e1"></div>
<div class="a" style="left:23px;top:746px;width:1875px;height:1px;background:#e1e1e1"></div>
<div class="a" style="left:23px;top:762px;width:1875px;height:1px;background:#e1e1e1"></div>
<div class="a" style="left:23px;top:778px;width:1875px;height:1px;background:#e1e1e1"></div>
<div class="a" style="left:23px;top:794px;width:1875px;height:1px;background:#e1e1e1"></div>
<div class="a" style="left:23px;top:810px;width:1875px;height:1px;background:#e1e1e1"></div>
<div class="a" style="left:23px;top:826px;width:1875px;height:1px;background:#e1e1e1"></div>
<div class="a" style="left:23px;top:842px;width:1875px;height:1px;background:#e1e1e1"></div>
<div class="a" style="left:23px;top:858px;width:1875px;height:1px;background:#e1e1e1"></div>
<div class="a" style="left:23px;top:874px;width:1875px;height:1px;background:#e1e1e1"></div>
<div class="a" style="left:23px;top:890px;width:1875px;height:1px;background:#e1e1e1"></div>
<div class="a" style="left:23px;top:906px;width:1875px;height:1px;background:#e1e1e1"></div>
<div class="a" style="left:23px;top:922px;width:1875px;height:1px;background:#e1e1e1"></div>
<div class="a" style="left:23px;top:938px;width:1875px;height:1px;background:#e1e1e1"></div>
<div class="a" style="left:23px;top:954px;width:1875px;height:1px;background:#e1e1e1"></div>
<div class="a" style="left:23px;top:970px;width:1875px;height:1px;background:#e1e1e1"></div>
<div class="a" style="left:23px;top:986px;width:1875px;height:1px;background:#e1e1e1"></div>
<div class="a" style="left:106px;top:235px;width:1px;height:755px;background:#e1e1e1"></div>
<div class="a" style="left:206px;top:235px;width:1px;height:755px;background:#e1e1e1"></div>
<div class="a" style="left:223px;top:235px;width:1px;height:755px;background:#e1e1e1"></div>
<div class="a" style="left:240px;top:235px;width:1px;height:755px;background:#e1e1e1"></div>
<div class="a" style="left:257px;top:235px;width:1px;height:755px;background:#e1e1e1"></div>
<div class="a" style="left:274px;top:235px;width:1px;height:755px;background:#e1e1e1"></div>
<div class="a" style="left:353px;top:235px;width:1px;height:755px;background:#e1e1e1"></div>
<div class="a" style="left:453px;top:235px;width:1px;height:755px;background:#e1e1e1"></div>
<div class="a" style="left:470px;top:235px;width:1px;height:755px;background:#e1e1e1"></div>
<div class="a" style="left:487px;top:235px;width:1px;height:755px;background:#e1e1e1"></div>
<div class="a" style="left:504px;top:235px;width:1px;height:755px;background:#e1e1e1"></div>
<div class="a" style="left:521px;top:235px;width:1px;height:755px;background:#e1e1e1"></div>
<div class="a" style="left:538px;top:235px;width:1px;height:755px;background:#e1e1e1"></div>
<div class="a" style="left:617px;top:235px;width:1px;height:755px;background:#e1e1e1"></div>
<div class="a" style="left:780px;top:235px;width:1px;height:755px;background:#e1e1e1"></div>
<div class="a" style="left:797px;top:235px;width:1px;height:755px;background:#e1e1e1"></div>
<div class="a" style="left:814px;top:235px;width:1px;height:755px;background:#e1e1e1"></div>
<div class="a" style="left:909px;top:235px;width:1px;height:755px;background:#e1e1e1"></div>
<div class="a" style="left:1009px;top:235px;width:1px;height:755px;background:#e1e1e1"></div>
<div class="a" style="left:1026px;top:235px;width:1px;height:755px;background:#e1e1e1"></div>
<div class="a" style="left:1043px;top:235px;width:1px;height:755px;background:#e1e1e1"></div>
<div class="a" style="left:1122px;top:235px;width:1px;height:755px;background:#e1e1e1"></div>
<div class="a" style="left:1222px;top:235px;width:1px;height:755px;background:#e1e1e1"></div>
<div class="a" style="left:1239px;top:235px;width:1px;height:755px;background:#e1e1e1"></div>
<div class="a" style="left:1318px;top:235px;width:1px;height:755px;background:#e1e1e1"></div>
<div class="a" style="left:1418px;top:235px;width:1px;height:755px;background:#e1e1e1"></div>
<div class="a" style="left:1435px;top:235px;width:1px;height:755px;background:#e1e1e1"></div>
<div class="a" style="left:1544px;top:235px;width:1px;height:755px;background:#e1e1e1"></div>
<div class="a" style="left:1644px;top:235px;width:1px;height:755px;background:#e1e1e1"></div>
<div class="a" style="left:1661px;top:235px;width:1px;height:755px;background:#e1e1e1"></div>
<div class="a" style="left:1771px;top:235px;width:1px;height:755px;background:#e1e1e1"></div>
<div class="a" style="left:1871px;top:235px;width:1px;height:755px;background:#e1e1e1"></div>
<div class="a" style="left:1888px;top:235px;width:1px;height:755px;background:#e1e1e1"></div>
<div class="a" style="left:0px;top:234px;width:1898px;height:1px;background:#ababab"></div>
<div class="a" style="left:22px;top:220px;width:1px;height:770px;background:#ababab"></div>
<div class="a" style="left:1898px;top:234px;width:1px;height:756px;background:#9a9a9a"></div>
<div class="a" style="left:106px;top:221px;width:1px;height:13px;background:#dcdcdc"></div>
<div class="a" style="left:206px;top:221px;width:1px;height:13px;background:#dcdcdc"></div>
<div class="a" style="left:223px;top:221px;width:1px;height:13px;background:#dcdcdc"></div>
<div class="a" style="left:240px;top:221px;width:1px;height:13px;background:#dcdcdc"></div>
<div class="a" style="left:257px;top:221px;width:1px;height:13px;background:#dcdcdc"></div>
<div class="a" style="left:274px;top:221px;width:1px;height:13px;background:#dcdcdc"></div>
<div class="a" style="left:353px;top:221px;width:1px;height:13px;background:#dcdcdc"></div>
<div class="a" style="left:453px;top:221px;width:1px;height:13px;background:#dcdcdc"></div>
<div class="a" style="left:470px;top:221px;width:1px;height:13px;background:#dcdcdc"></div>
<div class="a" style="left:487px;top:221px;width:1px;height:13px;background:#dcdcdc"></div>
<div class="a" style="left:504px;top:221px;width:1px;height:13px;background:#dcdcdc"></div>
<div class="a" style="left:521px;top:221px;width:1px;height:13px;background:#dcdcdc"></div>
<div class="a" style="left:538px;top:221px;width:1px;height:13px;background:#dcdcdc"></div>
<div class="a" style="left:617px;top:221px;width:1px;height:13px;background:#dcdcdc"></div>
<div class="a" style="left:780px;top:221px;width:1px;height:13px;background:#dcdcdc"></div>
<div class="a" style="left:797px;top:221px;width:1px;height:13px;background:#dcdcdc"></div>
<div class="a" style="left:814px;top:221px;width:1px;height:13px;background:#dcdcdc"></div>
<div class="a" style="left:909px;top:221px;width:1px;height:13px;background:#dcdcdc"></div>
<div class="a" style="left:1009px;top:221px;width:1px;height:13px;background:#dcdcdc"></div>
<div class="a" style="left:1026px;top:221px;width:1px;height:13px;background:#dcdcdc"></div>
<div class="a" style="left:1043px;top:221px;width:1px;height:13px;background:#dcdcdc"></div>
<div class="a" style="left:1122px;top:221px;width:1px;height:13px;background:#dcdcdc"></div>
<div class="a" style="left:1222px;top:221px;width:1px;height:13px;background:#dcdcdc"></div>
<div class="a" style="left:1239px;top:221px;width:1px;height:13px;background:#dcdcdc"></div>
<div class="a" style="left:1318px;top:221px;width:1px;height:13px;background:#dcdcdc"></div>
<div class="a" style="left:1418px;top:221px;width:1px;height:13px;background:#dcdcdc"></div>
<div class="a" style="left:1435px;top:221px;width:1px;height:13px;background:#dcdcdc"></div>
<div class="a" style="left:1544px;top:221px;width:1px;height:13px;background:#dcdcdc"></div>
<div class="a" style="left:1644px;top:221px;width:1px;height:13px;background:#dcdcdc"></div>
<div class="a" style="left:1661px;top:221px;width:1px;height:13px;background:#dcdcdc"></div>
<div class="a" style="left:1771px;top:221px;width:1px;height:13px;background:#dcdcdc"></div>
<div class="a" style="left:1871px;top:221px;width:1px;height:13px;background:#dcdcdc"></div>
<div class="a" style="left:1888px;top:221px;width:1px;height:13px;background:#dcdcdc"></div>
<div class="a" style="left:1898px;top:221px;width:1px;height:13px;background:#dcdcdc"></div>
<div class="a" style="left:1043px;top:219px;width:80px;height:15px;background:#d3d3d3"></div>
<div class="a" style="left:1043px;top:233px;width:80px;height:2px;background:#1e6e42"></div>
<div class="t ch" style="left:22px;top:222px;width:84px">A</div>
<div class="t ch" style="left:106px;top:222px;width:100px">B</div>
<div class="t ch" style="left:206px;top:222px;width:17px">C</div>
<div class="t ch" style="left:223px;top:222px;width:17px">D</div>
<div class="t ch" style="left:240px;top:222px;width:17px">E</div>
<div class="t ch" style="left:257px;top:222px;width:17px">F</div>
<div class="t ch" style="left:274px;top:222px;width:79px">G</div>
<div class="t ch" style="left:353px;top:222px;width:100px">H</div>
<div class="t ch" style="left:453px;top:222px;width:17px">I</div>
<div class="t ch" style="left:470px;top:222px;width:17px">J</div>
<div class="t ch" style="left:487px;top:222px;width:17px">K</div>
<div class="t ch" style="left:504px;top:222px;width:17px">L</div>
<div class="t ch" style="left:521px;top:222px;width:17px">M</div>
<div class="t ch" style="left:538px;top:222px;width:79px">N</div>
<div class="t ch" style="left:617px;top:222px;width:163px">O</div>
<div class="t ch" style="left:780px;top:222px;width:17px">P</div>
<div class="t ch" style="left:797px;top:222px;width:17px">Q</div>
<div class="t ch" style="left:814px;top:222px;width:95px">R</div>
<div class="t ch" style="left:909px;top:222px;width:100px">S</div>
<div class="t ch" style="left:1009px;top:222px;width:17px">T</div>
<div class="t ch" style="left:1026px;top:222px;width:17px">U</div>
<div class="t ch" style="left:1043px;top:222px;width:79px">V</div>
<div class="t ch" style="left:1122px;top:222px;width:100px">W</div>
<div class="t ch" style="left:1222px;top:222px;width:17px">X</div>
<div class="t ch" style="left:1239px;top:222px;width:79px">Y</div>
<div class="t ch" style="left:1318px;top:222px;width:100px">Z</div>
<div class="t ch" style="left:1418px;top:222px;width:17px">AA</div>
<div class="t ch" style="left:1435px;top:222px;width:109px">AB</div>
<div class="t ch" style="left:1544px;top:222px;width:100px">AC</div>
<div class="t ch" style="left:1644px;top:222px;width:17px">AD</div>
<div class="t ch" style="left:1661px;top:222px;width:110px">AE</div>
<div class="t ch" style="left:1771px;top:222px;width:100px">AF</div>
<div class="t ch" style="left:1871px;top:222px;width:17px">AG</div>
<div class="t ch" style="left:1889px;top:222px;width:7px;text-align:left">AH</div>
<svg style="left:11px;top:223px" width="9" height="9" viewBox="0 0 9 9"><path d="M9 0 V9 H0 Z" fill="#d9d9d9"/></svg>
<div class="a" style="left:2px;top:250px;width:20px;height:1px;background:linear-gradient(90deg,rgba(220,220,220,0),#d8d8d8 60%)"></div>
<div class="t rh" style="left:0px;top:238px;width:22px">1</div>
<div class="a" style="left:2px;top:266px;width:20px;height:1px;background:linear-gradient(90deg,rgba(220,220,220,0),#d8d8d8 60%)"></div>
<div class="t rh" style="left:0px;top:254px;width:22px">2</div>
<div class="a" style="left:2px;top:282px;width:20px;height:1px;background:linear-gradient(90deg,rgba(220,220,220,0),#d8d8d8 60%)"></div>
<div class="t rh" style="left:0px;top:270px;width:22px">3</div>
<div class="a" style="left:0px;top:283px;width:21px;height:15px;background:#d3d3d3"></div>
<div class="a" style="left:21px;top:282px;width:2px;height:17px;background:#1e6e42"></div>
<div class="a" style="left:2px;top:298px;width:20px;height:1px;background:linear-gradient(90deg,rgba(220,220,220,0),#d8d8d8 60%)"></div>
<div class="t rh" style="left:0px;top:286px;width:22px">4</div>
<div class="a" style="left:2px;top:314px;width:20px;height:1px;background:linear-gradient(90deg,rgba(220,220,220,0),#d8d8d8 60%)"></div>
<div class="t rh" style="left:0px;top:302px;width:22px">5</div>
<div class="a" style="left:2px;top:330px;width:20px;height:1px;background:linear-gradient(90deg,rgba(220,220,220,0),#d8d8d8 60%)"></div>
<div class="t rh" style="left:0px;top:318px;width:22px">6</div>
<div class="a" style="left:2px;top:346px;width:20px;height:1px;background:linear-gradient(90deg,rgba(220,220,220,0),#d8d8d8 60%)"></div>
<div class="t rh" style="left:0px;top:334px;width:22px">7</div>
<div class="a" style="left:2px;top:362px;width:20px;height:1px;background:linear-gradient(90deg,rgba(220,220,220,0),#d8d8d8 60%)"></div>
<div class="t rh" style="left:0px;top:350px;width:22px">8</div>
<div class="a" style="left:2px;top:378px;width:20px;height:1px;background:linear-gradient(90deg,rgba(220,220,220,0),#d8d8d8 60%)"></div>
<div class="t rh" style="left:0px;top:366px;width:22px">9</div>
<div class="a" style="left:2px;top:394px;width:20px;height:1px;background:linear-gradient(90deg,rgba(220,220,220,0),#d8d8d8 60%)"></div>
<div class="t rh" style="left:0px;top:382px;width:22px">10</div>
<div class="a" style="left:2px;top:410px;width:20px;height:1px;background:linear-gradient(90deg,rgba(220,220,220,0),#d8d8d8 60%)"></div>
<div class="t rh" style="left:0px;top:398px;width:22px">11</div>
<div class="a" style="left:2px;top:426px;width:20px;height:1px;background:linear-gradient(90deg,rgba(220,220,220,0),#d8d8d8 60%)"></div>
<div class="t rh" style="left:0px;top:414px;width:22px">12</div>
<div class="a" style="left:2px;top:442px;width:20px;height:1px;background:linear-gradient(90deg,rgba(220,220,220,0),#d8d8d8 60%)"></div>
<div class="t rh" style="left:0px;top:430px;width:22px">13</div>
<div class="a" style="left:2px;top:458px;width:20px;height:1px;background:linear-gradient(90deg,rgba(220,220,220,0),#d8d8d8 60%)"></div>
<div class="t rh" style="left:0px;top:446px;width:22px">14</div>
<div class="a" style="left:2px;top:474px;width:20px;height:1px;background:linear-gradient(90deg,rgba(220,220,220,0),#d8d8d8 60%)"></div>
<div class="t rh" style="left:0px;top:462px;width:22px">15</div>
<div class="a" style="left:2px;top:490px;width:20px;height:1px;background:linear-gradient(90deg,rgba(220,220,220,0),#d8d8d8 60%)"></div>
<div class="t rh" style="left:0px;top:478px;width:22px">16</div>
<div class="a" style="left:2px;top:506px;width:20px;height:1px;background:linear-gradient(90deg,rgba(220,220,220,0),#d8d8d8 60%)"></div>
<div class="t rh" style="left:0px;top:494px;width:22px">17</div>
<div class="a" style="left:2px;top:522px;width:20px;height:1px;background:linear-gradient(90deg,rgba(220,220,220,0),#d8d8d8 60%)"></div>
<div class="t rh" style="left:0px;top:510px;width:22px">18</div>
<div class="a" style="left:2px;top:538px;width:20px;height:1px;background:linear-gradient(90deg,rgba(220,220,220,0),#d8d8d8 60%)"></div>
<div class="t rh" style="left:0px;top:526px;width:22px">19</div>
<div class="a" style="left:2px;top:554px;width:20px;height:1px;background:linear-gradient(90deg,rgba(220,220,220,0),#d8d8d8 60%)"></div>
<div class="t rh" style="left:0px;top:542px;width:22px">20</div>
<div class="a" style="left:2px;top:570px;width:20px;height:1px;background:linear-gradient(90deg,rgba(220,220,220,0),#d8d8d8 60%)"></div>
<div class="t rh" style="left:0px;top:558px;width:22px">21</div>
<div class="a" style="left:2px;top:586px;width:20px;height:1px;background:linear-gradient(90deg,rgba(220,220,220,0),#d8d8d8 60%)"></div>
<div class="t rh" style="left:0px;top:574px;width:22px">22</div>
<div class="a" style="left:2px;top:602px;width:20px;height:1px;background:linear-gradient(90deg,rgba(220,220,220,0),#d8d8d8 60%)"></div>
<div class="t rh" style="left:0px;top:590px;width:22px">23</div>
<div class="a" style="left:2px;top:618px;width:20px;height:1px;background:linear-gradient(90deg,rgba(220,220,220,0),#d8d8d8 60%)"></div>
<div class="t rh" style="left:0px;top:606px;width:22px">24</div>
<div class="a" style="left:2px;top:634px;width:20px;height:1px;background:linear-gradient(90deg,rgba(220,220,220,0),#d8d8d8 60%)"></div>
<div class="t rh" style="left:0px;top:622px;width:22px">25</div>
<div class="a" style="left:2px;top:650px;width:20px;height:1px;background:linear-gradient(90deg,rgba(220,220,220,0),#d8d8d8 60%)"></div>
<div class="t rh" style="left:0px;top:638px;width:22px">26</div>
<div class="a" style="left:2px;top:666px;width:20px;height:1px;background:linear-gradient(90deg,rgba(220,220,220,0),#d8d8d8 60%)"></div>
<div class="t rh" style="left:0px;top:654px;width:22px">27</div>
<div class="a" style="left:2px;top:682px;width:20px;height:1px;background:linear-gradient(90deg,rgba(220,220,220,0),#d8d8d8 60%)"></div>
<div class="t rh" style="left:0px;top:670px;width:22px">28</div>
<div class="a" style="left:2px;top:698px;width:20px;height:1px;background:linear-gradient(90deg,rgba(220,220,220,0),#d8d8d8 60%)"></div>
<div class="t rh" style="left:0px;top:686px;width:22px">29</div>
<div class="a" style="left:2px;top:714px;width:20px;height:1px;background:linear-gradient(90deg,rgba(220,220,220,0),#d8d8d8 60%)"></div>
<div class="t rh" style="left:0px;top:702px;width:22px">30</div>
<div class="a" style="left:2px;top:730px;width:20px;height:1px;background:linear-gradient(90deg,rgba(220,220,220,0),#d8d8d8 60%)"></div>
<div class="t rh" style="left:0px;top:718px;width:22px">31</div>
<div class="a" style="left:2px;top:746px;width:20px;height:1px;background:linear-gradient(90deg,rgba(220,220,220,0),#d8d8d8 60%)"></div>
<div class="t rh" style="left:0px;top:734px;width:22px">32</div>
<div class="a" style="left:2px;top:762px;width:20px;height:1px;background:linear-gradient(90deg,rgba(220,220,220,0),#d8d8d8 60%)"></div>
<div class="t rh" style="left:0px;top:750px;width:22px">33</div>
<div class="a" style="left:2px;top:778px;width:20px;height:1px;background:linear-gradient(90deg,rgba(220,220,220,0),#d8d8d8 60%)"></div>
<div class="t rh" style="left:0px;top:766px;width:22px">34</div>
<div class="a" style="left:2px;top:794px;width:20px;height:1px;background:linear-gradient(90deg,rgba(220,220,220,0),#d8d8d8 60%)"></div>
<div class="t rh" style="left:0px;top:782px;width:22px">35</div>
<div class="a" style="left:2px;top:810px;width:20px;height:1px;background:linear-gradient(90deg,rgba(220,220,220,0),#d8d8d8 60%)"></div>
<div class="t rh" style="left:0px;top:798px;width:22px">36</div>
<div class="a" style="left:2px;top:826px;width:20px;height:1px;background:linear-gradient(90deg,rgba(220,220,220,0),#d8d8d8 60%)"></div>
<div class="t rh" style="left:0px;top:814px;width:22px">37</div>
<div class="a" style="left:2px;top:842px;width:20px;height:1px;background:linear-gradient(90deg,rgba(220,220,220,0),#d8d8d8 60%)"></div>
<div class="t rh" style="left:0px;top:830px;width:22px">38</div>
<div class="a" style="left:2px;top:858px;width:20px;height:1px;background:linear-gradient(90deg,rgba(220,220,220,0),#d8d8d8 60%)"></div>
<div class="t rh" style="left:0px;top:846px;width:22px">39</div>
<div class="a" style="left:2px;top:874px;width:20px;height:1px;background:linear-gradient(90deg,rgba(220,220,220,0),#d8d8d8 60%)"></div>
<div class="t rh" style="left:0px;top:862px;width:22px">40</div>
<div class="a" style="left:2px;top:890px;width:20px;height:1px;background:linear-gradient(90deg,rgba(220,220,220,0),#d8d8d8 60%)"></div>
<div class="t rh" style="left:0px;top:878px;width:22px">41</div>
<div class="a" style="left:2px;top:906px;width:20px;height:1px;background:linear-gradient(90deg,rgba(220,220,220,0),#d8d8d8 60%)"></div>
<div class="t rh" style="left:0px;top:894px;width:22px">42</div>
<div class="a" style="left:2px;top:922px;width:20px;height:1px;background:linear-gradient(90deg,rgba(220,220,220,0),#d8d8d8 60%)"></div>
<div class="t rh" style="left:0px;top:910px;width:22px">43</div>
<div class="a" style="left:2px;top:938px;width:20px;height:1px;background:linear-gradient(90deg,rgba(220,220,220,0),#d8d8d8 60%)"></div>
<div class="t rh" style="left:0px;top:926px;width:22px">44</div>
<div class="a" style="left:2px;top:954px;width:20px;height:1px;background:linear-gradient(90deg,rgba(220,220,220,0),#d8d8d8 60%)"></div>
<div class="t rh" style="left:0px;top:942px;width:22px">45</div>
<div class="a" style="left:2px;top:970px;width:20px;height:1px;background:linear-gradient(90deg,rgba(220,220,220,0),#d8d8d8 60%)"></div>
<div class="t rh" style="left:0px;top:958px;width:22px">46</div>
<div class="a" style="left:2px;top:986px;width:20px;height:1px;background:linear-gradient(90deg,rgba(220,220,220,0),#d8d8d8 60%)"></div>
<div class="t rh" style="left:0px;top:974px;width:22px">47</div>
<div class="a" style="left:23px;top:267px;width:184px;height:112px;background:#fff"></div>
<div class="a" style="left:23px;top:266px;width:184px;height:16px;background:#c1e4f5"></div>
<div class="a" style="left:23px;top:282px;width:184px;height:1px;background:#3fb0e0"></div>
<div class="a" style="left:23px;top:362px;width:184px;height:1px;background:#3fb0e0"></div>
<div class="a" style="left:23px;top:363px;width:184px;height:16px;background:#c1e4f5"></div>
<div class="a" style="left:206px;top:283px;width:1px;height:79px;background:#e1e1e1"></div>
<div class="t cb" style="left:25px;top:271px">Row Labels</div>
<div class="t cb" style="left:109px;top:271px">Sum of Total Sales</div>
<div class="a" style="left:90px;top:266px;width:16px;height:16px;background:linear-gradient(#fdfdfd,#efefef);border:1px solid #ababab"></div>
<svg style="left:93px;top:269px" width="10" height="10" viewBox="0 0 10 10"><path d="M3 1 H10 L7.5 4 V8 H5.5 V4 Z" fill="#555"/><path d="M0.5 6 L2.5 8.5 L4.5 6 Z" fill="#555"/></svg>
<div class="t cr" style="left:25px;top:286px">Buraydah</div>
<div class="t cr nr" style="left:106px;top:286px;width:98px">585,177</div>
<div class="t cr" style="left:25px;top:302px">Hafar Al Batin</div>
<div class="t cr nr" style="left:106px;top:302px;width:98px">543,856</div>
<div class="t cr" style="left:25px;top:318px">Medina</div>
<div class="t cr nr" style="left:106px;top:318px;width:98px">654,859</div>
<div class="t cr" style="left:25px;top:334px">Riyadh</div>
<div class="t cr nr" style="left:106px;top:334px;width:98px">718,379</div>
<div class="t cr" style="left:25px;top:350px">Tabuk</div>
<div class="t cr nr" style="left:106px;top:350px;width:98px">604,708</div>
<div class="t cb" style="left:25px;top:367px">Grand Total</div>
<div class="t cb nr bn" style="left:106px;top:367px;width:98px">3,106,979</div>
<div class="a" style="left:275px;top:267px;width:179px;height:64px;background:#fff"></div>
<div class="a" style="left:274px;top:266px;width:180px;height:16px;background:#c1e4f5"></div>
<div class="a" style="left:274px;top:282px;width:180px;height:1px;background:#3fb0e0"></div>
<div class="a" style="left:274px;top:314px;width:180px;height:1px;background:#3fb0e0"></div>
<div class="a" style="left:274px;top:315px;width:180px;height:16px;background:#c1e4f5"></div>
<div class="a" style="left:453px;top:283px;width:1px;height:31px;background:#e1e1e1"></div>
<div class="t cb" style="left:277px;top:271px">Row Labels</div>
<div class="t cb" style="left:356px;top:271px">Sum of Total Sales</div>
<div class="a" style="left:337px;top:266px;width:16px;height:16px;background:linear-gradient(#fdfdfd,#efefef);border:1px solid #ababab"></div>
<svg style="left:342px;top:273px" width="7" height="4" viewBox="0 0 7 4"><path d="M0 0.5 H6.5" stroke="#555" stroke-width="1"/><path d="M2 1 L3.25 2.6 L4.5 1 Z" fill="#555"/></svg>
<div class="t cr" style="left:277px;top:286px">OnLine</div>
<div class="t cr nr" style="left:353px;top:286px;width:98px">94.51%</div>
<div class="t cr" style="left:277px;top:302px">Store</div>
<div class="t cr nr" style="left:353px;top:302px;width:98px">5.49%</div>
<div class="t cb" style="left:277px;top:319px">Grand Total</div>
<div class="t cb nr bn" style="left:353px;top:319px;width:98px">100.00%</div>
<div class="a" style="left:539px;top:267px;width:242px;height:112px;background:#fff"></div>
<div class="a" style="left:538px;top:266px;width:243px;height:16px;background:#c1e4f5"></div>
<div class="a" style="left:538px;top:282px;width:243px;height:1px;background:#3fb0e0"></div>
<div class="a" style="left:538px;top:362px;width:243px;height:1px;background:#3fb0e0"></div>
<div class="a" style="left:538px;top:363px;width:243px;height:16px;background:#c1e4f5"></div>
<div class="a" style="left:780px;top:283px;width:1px;height:79px;background:#e1e1e1"></div>
<div class="t cb" style="left:541px;top:271px">Row Labels</div>
<div class="t cb" style="left:620px;top:271px">Count of Customer Satisfaction</div>
<div class="a" style="left:601px;top:266px;width:16px;height:16px;background:linear-gradient(#fdfdfd,#efefef);border:1px solid #ababab"></div>
<svg style="left:606px;top:273px" width="7" height="4" viewBox="0 0 7 4"><path d="M0 0.5 H6.5" stroke="#555" stroke-width="1"/><path d="M2 1 L3.25 2.6 L4.5 1 Z" fill="#555"/></svg>
<div class="t cr" style="left:541px;top:286px">High</div>
<div class="t cr nr" style="left:617px;top:286px;width:161px">862</div>
<div class="t cr" style="left:541px;top:302px">Low</div>
<div class="t cr nr" style="left:617px;top:302px;width:161px">360</div>
<div class="t cr" style="left:541px;top:318px">Ok</div>
<div class="t cr nr" style="left:617px;top:318px;width:161px">701</div>
<div class="t cr" style="left:541px;top:334px">Very High</div>
<div class="t cr nr" style="left:617px;top:334px;width:161px">509</div>
<div class="t cr" style="left:541px;top:350px">Very Low</div>
<div class="t cr nr" style="left:617px;top:350px;width:161px">166</div>
<div class="t cb" style="left:541px;top:367px">Grand Total</div>
<div class="t cb nr bn" style="left:617px;top:367px;width:161px">2,598</div>
<div class="a" style="left:815px;top:267px;width:195px;height:80px;background:#fff"></div>
<div class="a" style="left:814px;top:266px;width:196px;height:16px;background:#c1e4f5"></div>
<div class="a" style="left:814px;top:282px;width:196px;height:1px;background:#3fb0e0"></div>
<div class="a" style="left:814px;top:330px;width:196px;height:1px;background:#3fb0e0"></div>
<div class="a" style="left:814px;top:331px;width:196px;height:16px;background:#c1e4f5"></div>
<div class="a" style="left:1009px;top:283px;width:1px;height:47px;background:#e1e1e1"></div>
<div class="t cb" style="left:817px;top:271px">Row Labels</div>
<div class="t cb" style="left:912px;top:271px">Sum of Total Sales</div>
<div class="a" style="left:893px;top:266px;width:16px;height:16px;background:linear-gradient(#fdfdfd,#efefef);border:1px solid #ababab"></div>
<svg style="left:898px;top:273px" width="7" height="4" viewBox="0 0 7 4"><path d="M0 0.5 H6.5" stroke="#555" stroke-width="1"/><path d="M2 1 L3.25 2.6 L4.5 1 Z" fill="#555"/></svg>
<div class="t cr" style="left:817px;top:286px">Loyal Customer</div>
<div class="t cr nr" style="left:909px;top:286px;width:98px">2,801,861</div>
<div class="t cr" style="left:817px;top:302px">New Customer</div>
<div class="t cr nr" style="left:909px;top:302px;width:98px">932,912</div>
<div class="t cr" style="left:817px;top:318px">Retail Customer</div>
<div class="t cr nr" style="left:909px;top:318px;width:98px">1,982,112</div>
<div class="t cb" style="left:817px;top:335px">Grand Total</div>
<div class="t cb nr bn" style="left:909px;top:335px;width:98px">5,716,885</div>
<div class="a" style="left:1044px;top:267px;width:179px;height:224px;background:#fff"></div>
<div class="a" style="left:1043px;top:266px;width:180px;height:16px;background:#c1e4f5"></div>
<div class="a" style="left:1043px;top:282px;width:180px;height:1px;background:#3fb0e0"></div>
<div class="a" style="left:1043px;top:474px;width:180px;height:1px;background:#3fb0e0"></div>
<div class="a" style="left:1043px;top:475px;width:180px;height:16px;background:#c1e4f5"></div>
<div class="a" style="left:1222px;top:283px;width:1px;height:191px;background:#e1e1e1"></div>
<div class="t cb" style="left:1046px;top:271px">Row Labels</div>
<div class="t cb" style="left:1125px;top:271px">Sum of Total Sales</div>
<div class="a" style="left:1106px;top:266px;width:16px;height:16px;background:linear-gradient(#fdfdfd,#efefef);border:1px solid #ababab"></div>
<svg style="left:1111px;top:273px" width="7" height="4" viewBox="0 0 7 4"><path d="M0 0.5 H6.5" stroke="#555" stroke-width="1"/><path d="M2 1 L3.25 2.6 L4.5 1 Z" fill="#555"/></svg>
<div class="t cr" style="left:1046px;top:286px">Jan</div>
<div class="t cr nr" style="left:1122px;top:286px;width:98px">448,379</div>
<div class="t cr" style="left:1046px;top:302px">Feb</div>
<div class="t cr nr" style="left:1122px;top:302px;width:98px">450,066</div>
<div class="t cr" style="left:1046px;top:318px">Mar</div>
<div class="t cr nr" style="left:1122px;top:318px;width:98px">482,736</div>
<div class="t cr" style="left:1046px;top:334px">Apr</div>
<div class="t cr nr" style="left:1122px;top:334px;width:98px">558,993</div>
<div class="t cr" style="left:1046px;top:350px">May</div>
<div class="t cr nr" style="left:1122px;top:350px;width:98px">452,362</div>
<div class="t cr" style="left:1046px;top:366px">Jun</div>
<div class="t cr nr" style="left:1122px;top:366px;width:98px">525,320</div>
<div class="t cr" style="left:1046px;top:382px">Jul</div>
<div class="t cr nr" style="left:1122px;top:382px;width:98px">497,609</div>
<div class="t cr" style="left:1046px;top:398px">Aug</div>
<div class="t cr nr" style="left:1122px;top:398px;width:98px">429,813</div>
<div class="t cr" style="left:1046px;top:414px">Sep</div>
<div class="t cr nr" style="left:1122px;top:414px;width:98px">483,943</div>
<div class="t cr" style="left:1046px;top:430px">Oct</div>
<div class="t cr nr" style="left:1122px;top:430px;width:98px">440,081</div>
<div class="t cr" style="left:1046px;top:446px">Nov</div>
<div class="t cr nr" style="left:1122px;top:446px;width:98px">471,098</div>
<div class="t cr" style="left:1046px;top:462px">Dec</div>
<div class="t cr nr" style="left:1122px;top:462px;width:98px">476,485</div>
<div class="t cb" style="left:1046px;top:479px">Grand Total</div>
<div class="t cb nr bn" style="left:1122px;top:479px;width:98px">5,716,885</div>
<div class="a" style="left:1240px;top:267px;width:179px;height:64px;background:#fff"></div>
<div class="a" style="left:1239px;top:266px;width:180px;height:16px;background:#c1e4f5"></div>
<div class="a" style="left:1239px;top:282px;width:180px;height:1px;background:#3fb0e0"></div>
<div class="a" style="left:1239px;top:314px;width:180px;height:1px;background:#3fb0e0"></div>
<div class="a" style="left:1239px;top:315px;width:180px;height:16px;background:#c1e4f5"></div>
<div class="a" style="left:1418px;top:283px;width:1px;height:31px;background:#e1e1e1"></div>
<div class="t cb" style="left:1242px;top:271px">Row Labels</div>
<div class="t cb" style="left:1321px;top:271px">Sum of Total Sales</div>
<div class="a" style="left:1302px;top:266px;width:16px;height:16px;background:linear-gradient(#fdfdfd,#efefef);border:1px solid #ababab"></div>
<svg style="left:1307px;top:273px" width="7" height="4" viewBox="0 0 7 4"><path d="M0 0.5 H6.5" stroke="#555" stroke-width="1"/><path d="M2 1 L3.25 2.6 L4.5 1 Z" fill="#555"/></svg>
<div class="t cr" style="left:1242px;top:286px">Female</div>
<div class="t cr nr" style="left:1318px;top:286px;width:98px">55.17%</div>
<div class="t cr" style="left:1242px;top:302px">Male</div>
<div class="t cr nr" style="left:1318px;top:302px;width:98px">44.83%</div>
<div class="t cb" style="left:1242px;top:319px">Grand Total</div>
<div class="t cb nr bn" style="left:1318px;top:319px;width:98px">100.00%</div>
<div class="a" style="left:1436px;top:267px;width:209px;height:112px;background:#fff"></div>
<div class="a" style="left:1435px;top:266px;width:210px;height:16px;background:#c1e4f5"></div>
<div class="a" style="left:1435px;top:282px;width:210px;height:1px;background:#3fb0e0"></div>
<div class="a" style="left:1435px;top:362px;width:210px;height:1px;background:#3fb0e0"></div>
<div class="a" style="left:1435px;top:363px;width:210px;height:16px;background:#c1e4f5"></div>
<div class="a" style="left:1644px;top:283px;width:1px;height:79px;background:#e1e1e1"></div>
<div class="t cb" style="left:1438px;top:271px">Row Labels</div>
<div class="t cb" style="left:1547px;top:271px">Sum of Total Sales</div>
<div class="a" style="left:1528px;top:266px;width:16px;height:16px;background:linear-gradient(#fdfdfd,#efefef);border:1px solid #ababab"></div>
<svg style="left:1531px;top:269px" width="10" height="10" viewBox="0 0 10 10"><path d="M3 1 H10 L7.5 4 V8 H5.5 V4 Z" fill="#555"/><path d="M0.5 6 L2.5 8.5 L4.5 6 Z" fill="#555"/></svg>
<div class="t cr" style="left:1438px;top:286px">Boys' Long Sleeve</div>
<div class="t cr nr" style="left:1544px;top:286px;width:98px">670,950</div>
<div class="t cr" style="left:1438px;top:302px">Digger Megalodon</div>
<div class="t cr nr" style="left:1544px;top:302px;width:98px">774,270</div>
<div class="t cr" style="left:1438px;top:318px">Half-Zip Hooded</div>
<div class="t cr nr" style="left:1544px;top:318px;width:98px">779,590</div>
<div class="t cr" style="left:1438px;top:334px">Print Swimsuits</div>
<div class="t cr nr" style="left:1544px;top:334px;width:98px">684,873</div>
<div class="t cr" style="left:1438px;top:350px">Swim Trunks</div>
<div class="t cr nr" style="left:1544px;top:350px;width:98px">670,820</div>
<div class="t cb" style="left:1438px;top:367px">Grand Total</div>
<div class="t cb nr bn" style="left:1544px;top:367px;width:98px">3,580,503</div>
<div class="a" style="left:1662px;top:267px;width:210px;height:96px;background:#fff"></div>
<div class="a" style="left:1661px;top:266px;width:211px;height:16px;background:#c1e4f5"></div>
<div class="a" style="left:1661px;top:282px;width:211px;height:1px;background:#3fb0e0"></div>
<div class="a" style="left:1661px;top:346px;width:211px;height:1px;background:#3fb0e0"></div>
<div class="a" style="left:1661px;top:347px;width:211px;height:16px;background:#c1e4f5"></div>
<div class="a" style="left:1871px;top:283px;width:1px;height:63px;background:#e1e1e1"></div>
<div class="t cb" style="left:1664px;top:271px">Row Labels</div>
<div class="t cb" style="left:1774px;top:271px">Sum of Total Sales</div>
<div class="a" style="left:1755px;top:266px;width:16px;height:16px;background:linear-gradient(#fdfdfd,#efefef);border:1px solid #ababab"></div>
<svg style="left:1758px;top:269px" width="10" height="10" viewBox="0 0 10 10"><path d="M3 1 H10 L7.5 4 V8 H5.5 V4 Z" fill="#555"/><path d="M0.5 6 L2.5 8.5 L4.5 6 Z" fill="#555"/></svg>
<div class="t cr" style="left:1664px;top:286px">Amal Mohamed</div>
<div class="t cr nr" style="left:1771px;top:286px;width:98px">594,242</div>
<div class="t cr" style="left:1664px;top:302px">Azza Abdelrahman</div>
<div class="t cr nr" style="left:1771px;top:302px;width:98px">507,054</div>
<div class="t cr" style="left:1664px;top:318px">Maisoun Kamal</div>
<div class="t cr nr" style="left:1771px;top:318px;width:98px">741,525</div>
<div class="t cr" style="left:1664px;top:334px">Zenab Elsayad</div>
<div class="t cr nr" style="left:1771px;top:334px;width:98px">562,280</div>
<div class="t cb" style="left:1664px;top:351px">Grand Total</div>
<div class="t cb nr bn" style="left:1771px;top:351px;width:98px">2,405,101</div>
<div class="a" style="left:1042px;top:281px;width:82px;height:19px;border:2px solid #1e6e42"></div>
<div class="a" style="left:1119px;top:295px;width:6px;height:6px;background:#1e6e42;border:1px solid #fff;border-right:0;border-bottom:0"></div>
<div class="a" style="left:1899px;top:220px;width:21px;height:770px;background:#f3f3f3"></div>
<svg style="left:1904px;top:223px" width="10" height="8" viewBox="0 0 10 8"><path d="M0.5 7 L5 1 L9.5 7 Z" fill="#6e6e6e" stroke="#6e6e6e" stroke-linejoin="round"/></svg>
<div class="a" style="left:1905px;top:236px;width:9px;height:728px;border-radius:4.5px;background:#6e6e6e"></div>
<svg style="left:1904px;top:981px" width="10" height="8" viewBox="0 0 10 8"><path d="M0.5 1 L5 7 L9.5 1 Z" fill="#6e6e6e" stroke="#6e6e6e" stroke-linejoin="round"/></svg>
<!-- sheet tab bar -->
<div class="a" style="left:0px;top:990px;width:1920px;height:29px;background:#f0f0f0"></div>
<div class="a" style="left:0px;top:990px;width:1898px;height:1px;background:#a8a8a8"></div>
<div class="a" style="left:16px;top:991px;width:84px;height:26px;background:#f4f4f4"></div>
<svg style="left:27px;top:1001px" width="5" height="8" viewBox="0 0 5 8"><path d="M5 0 V8 L0 4 Z" fill="#c4c4c4"/></svg>
<svg style="left:56px;top:1001px" width="5" height="8" viewBox="0 0 5 8"><path d="M0 0 V8 L5 4 Z" fill="#c4c4c4"/></svg>
<div class="a" style="left:201px;top:991px;width:232px;height:26px;background:#f4f4f4"></div>
<div class="a" style="left:100px;top:990px;width:101px;height:26px;background:#fff;border-left:1px solid #a8a8a8;border-right:1px solid #a8a8a8"></div>
<div class="a" style="left:100px;top:1013px;width:101px;height:2px;background:#0f6b3b"></div>
<div class="t" style="left:112px;top:998px;font-size:12.5px;font-weight:700;color:#0f6b3b;letter-spacing:0.15px">dataanalysis</div>
<div class="t" style="left:212px;top:997px;font-size:13px;color:#333;letter-spacing:0.2px">dashboard</div>
<div class="a" style="left:289px;top:994px;width:1px;height:20px;background:#a8a8a8"></div>
<div class="t" style="left:302px;top:998px;font-size:12.5px;color:#333">Sales Data</div>
<div class="a" style="left:376px;top:994px;width:1px;height:20px;background:#a8a8a8"></div>
<svg style="left:410px;top:996px" width="16" height="16" viewBox="0 0 16 16"><circle cx="8" cy="8" r="7.3" fill="none" stroke="#555" stroke-width="1.1"/><path d="M8 4 V12 M4 8 H12" stroke="#555" stroke-width="1.6"/></svg>
<!-- horizontal scroll -->
<div class="a" style="left:1664px;top:1000px;width:2px;height:2px;background:#222"></div>
<div class="a" style="left:1664px;top:1004px;width:2px;height:2px;background:#222"></div>
<div class="a" style="left:1664px;top:1008px;width:2px;height:2px;background:#222"></div>
<div class="a" style="left:1679px;top:995px;width:222px;height:17px;border-radius:8px;background:#f4f4f4"></div>
<svg style="left:1684px;top:999px" width="6" height="9" viewBox="0 0 6 9"><path d="M6 0 V9 L0 4.5 Z" fill="#6e6e6e"/></svg>
<div class="a" style="left:1696px;top:999px;width:184px;height:9px;border-radius:4.5px;background:#6e6e6e"></div>
<svg style="left:1889px;top:999px" width="6" height="9" viewBox="0 0 6 9"><path d="M0 0 V9 L6 4.5 Z" fill="#6e6e6e"/></svg>
<!-- status bar -->
<div class="a" style="left:0px;top:1018px;width:1920px;height:1px;background:#fdfdfd"></div>
<div class="a" style="left:0px;top:1019px;width:1920px;height:21px;background:#f4f4f4"></div>
<div class="t" style="left:11px;top:1025px;font-size:11.5px;color:#222">Ready</div>
<svg style="left:62px;top:1022px" width="15" height="15" viewBox="0 0 15 15"><circle cx="6.5" cy="2.2" r="1.8" fill="none" stroke="#333" stroke-width="0.9"/><path d="M0.5 4.5 C3 5.5 10 5.5 12.5 4.5 M6.5 5.5 V9 L4 14 M6.5 9 L8 11" fill="none" stroke="#333" stroke-width="0.9"/><path d="M9 10 L14 14.5 M14 10 L9 14.5" stroke="#333" stroke-width="0.9"/></svg>
<div class="t" style="left:79px;top:1025px;font-size:11.5px;color:#222;letter-spacing:-0.1px">Accessibility: Investigate</div>
<div class="a" style="left:1620px;top:1019px;width:40px;height:21px;background:#dcdcdc"></div>
<svg style="left:1633px;top:1022px" width="14" height="14" viewBox="0 0 14 14"><path d="M0.5 0.5 H13.5 V13.5 H0.5 Z M0.5 4.8 H13.5 M0.5 9.2 H13.5 M4.8 0.5 V13.5 M9.2 0.5 V13.5" fill="none" stroke="#222" stroke-width="1.1"/></svg>
<svg style="left:1673px;top:1022px" width="15" height="14" viewBox="0 0 15 14"><rect x="0.5" y="0.5" width="14" height="13" fill="none" stroke="#222" stroke-width="1.1"/><rect x="3" y="2.5" width="9" height="9" fill="none" stroke="#222" stroke-width="0.9"/><path d="M5 5 H10 M5 7 H10 M5 9 H10" stroke="#222" stroke-width="0.8"/></svg>
<svg style="left:1713px;top:1022px" width="15" height="14" viewBox="0 0 15 14"><path d="M0.5 0.5 H14.5 V13.5 H0.5 Z M0.5 7 H8.5 V0.5 M4.5 0.5 V7" fill="none" stroke="#222" stroke-width="1.1"/></svg>
<div class="a" style="left:1746px;top:1028px;width:7px;height:1px;background:#333"></div>
<div class="a" style="left:1759px;top:1029px;width:100px;height:1px;background:#6e6e6e"></div>
<div class="a" style="left:1809px;top:1026px;width:1px;height:6px;background:#6e6e6e"></div>
<div class="a" style="left:1796px;top:1024px;width:5px;height:11px;background:#6e6e6e;border-radius:1px"></div>
<div class="a" style="left:1863px;top:1028px;width:8px;height:1px;background:#333"></div>
<div class="a" style="left:1867px;top:1024px;width:1px;height:9px;background:#333"></div>
<div class="t" style="left:1884px;top:1025px;font-size:11.5px;color:#333">80%</div>

<!-- taskbar -->
<div class="a" style="left:0px;top:1040px;width:1920px;height:40px;background:#453b32"></div>
<svg style="left:16px;top:1052px" width="17" height="17" viewBox="0 0 17 17"><path d="M0 2.3 L7 1.3 V8 H0 Z M8 1.1 L17 0 V8 H8 Z M0 9 H7 V15.7 L0 14.7 Z M8 9 H17 V17 L8 15.9 Z" fill="#fff"/></svg>
<div class="a" style="left:48px;top:1040px;width:288px;height:40px;background:#f0f0f0;border-top:1px solid #d9d9d9"></div>
<svg style="left:60px;top:1052px" width="17" height="17" viewBox="0 0 17 17"><circle cx="10.5" cy="6.5" r="5.5" fill="none" stroke="#222" stroke-width="1.2"/><path d="M6.5 10.5 L0.8 16.2" stroke="#222" stroke-width="1.4"/></svg>
<div class="t" style="left:88px;top:1053px;font-size:14.5px;color:#222">Type here to search</div>
<!-- decorative scene -->
<svg style="left:250px;top:1038px" width="90" height="42" viewBox="250 1038 90 42">
  <path d="M285 1066 C288 1054 292 1050 296 1053 C300 1058 303 1060 308 1058 L318 1068 L300 1072 Z" fill="#8fd3ad"/>
  <path d="M292 1052 L298 1060 L304 1070 L296 1072 Z" fill="#f2c070"/>
  <path d="M298 1058 C304 1055 308 1056 311 1060 L312 1068 L302 1070 Z" fill="#5fbf8a"/>
  <path d="M257 1080 L270 1070 L280 1066 L290 1068 L296 1073 L306 1068 L316 1066 L322 1070 L332 1080 Z" fill="#1f5e3c"/>
  <path d="M262 1080 L272 1072 L282 1072 L286 1080 Z" fill="#2d3a33"/>
  <path d="M320 1080 L316 1070 L324 1072 L332 1080 Z" fill="#1a2a30"/>
  <path d="M293 1080 L296 1073 L304 1072 L308 1080 Z" fill="#f0b830"/>
  <path d="M296 1073 L306 1068 L316 1070 L312 1080 L306 1080 Z" fill="#3fa06a"/>
  <path d="M260 1070 C262 1064 268 1063 272 1066 C276 1063 280 1066 278 1072 L262 1074 Z" fill="#b9a86a"/>
  <circle cx="276" cy="1049" r="5.5" fill="#d8b040"/><circle cx="281" cy="1047" r="4.5" fill="#a8c070"/><circle cx="272" cy="1053" r="3.5" fill="#a8c070"/>
  <rect x="276" y="1050" width="2" height="16" fill="#8a4a10"/>
  <path d="M314 1041 L319 1050 L317 1050 L321 1058 L318 1058 L322 1064 L306 1064 L310 1058 L307 1058 L311 1050 L309 1050 Z" fill="#2b8c5c"/>
  <rect x="313" y="1063" width="2" height="5" fill="#8a4a10"/>
  <circle cx="272" cy="1060" r="2.3" fill="#f08a3a"/><circle cx="288" cy="1064" r="2.8" fill="#f08a3a"/><circle cx="282" cy="1066" r="2" fill="#f08a3a"/><circle cx="285" cy="1070" r="1.8" fill="#e84a3a"/>
  <circle cx="326" cy="1062" r="3" fill="#f5a090"/><circle cx="326" cy="1069" r="2.2" fill="#f5a090"/><circle cx="305" cy="1064" r="2" fill="#f5b0b0"/>
</svg>
<!-- task view -->
<svg style="left:352px;top:1052px" width="17" height="16" viewBox="0 0 17 16"><path d="M0 0.5 H12 M0 15.5 H12 M2.5 3.5 H9.5 V12.5 H2.5 Z M14.5 0 V3 M14.5 5 V11 M14.5 13 V16" fill="none" stroke="#fff" stroke-width="1.2"/></svg>
<!-- copilot -->
<svg style="left:398px;top:1048px" width="26" height="24" viewBox="398 1048 26 24">
  <defs>
   <linearGradient id="cpl" x1="0" y1="0" x2="0" y2="1"><stop offset="0" stop-color="#2d8be6"/><stop offset="0.45" stop-color="#47b574"/><stop offset="1" stop-color="#f2b437"/></linearGradient>
   <linearGradient id="cpr" x1="1" y1="0" x2="0" y2="1"><stop offset="0" stop-color="#b86ee8"/><stop offset="0.5" stop-color="#ea4f8c"/><stop offset="1" stop-color="#f59a3a"/></linearGradient>
  </defs>
  <path d="M403.5 1050 H416 Q419.5 1050 418.5 1053.5 L414 1063 Q412.5 1066 409 1066 H404 Q400 1066 400 1062 V1054 Q400 1050 403.5 1050 Z" fill="url(#cpl)"/>
  <path d="M414.5 1056 H419 Q422.5 1056 422.5 1060 V1066 Q422.5 1070 418.5 1070 H408 Q404.5 1070 405.5 1066.5 L410.5 1058.5 Q411.5 1056 414.5 1056 Z" fill="url(#cpr)"/>
</svg>
<!-- explorer -->
<svg style="left:449px;top:1051px" width="22" height="19" viewBox="0 0 22 19"><path d="M0 1 H8 L10 3 H22 V19 H0 Z" fill="#f0b83c"/><rect x="0" y="5" width="22" height="14" fill="#fcd46a"/><path d="M5 19 V11 H17 V19 H13 V14 H9 V19 Z" fill="#2f7fd6"/></svg>
<!-- edge -->
<svg style="left:496px;top:1047px" width="27" height="27" viewBox="496 1047 27 27">
  <defs><linearGradient id="edg" x1="0" y1="0" x2="1" y2="0"><stop offset="0" stop-color="#2f8ae0"/><stop offset="0.6" stop-color="#35b0e8"/><stop offset="1" stop-color="#4cc070"/></linearGradient></defs>
  <circle cx="509" cy="1060" r="12" fill="url(#edg)"/>
  <path d="M497 1061 C497 1068 503 1072.5 509.5 1072 C514 1071.5 517 1069 519 1066 C515 1068 510 1067 507.5 1064 C505 1061 506 1057 509 1055 C504 1054 498 1056 497 1061 Z" fill="#1d5fc0"/>
  <circle cx="514" cy="1061" r="3.6" fill="#453b32"/>
  <path d="M510.5 1061 C510.5 1057 513 1055 516 1055.5 C519.5 1056 521 1059 521 1062 H514 Z" fill="#4cc070"/>
</svg>
<!-- store -->
<svg style="left:546px;top:1049px" width="23" height="23" viewBox="0 0 23 23"><path d="M7 5 V2.5 A2 2 0 0 1 9 0.5 H14 A2 2 0 0 1 16 2.5 V5" fill="none" stroke="#2f8ae0" stroke-width="1.5"/><rect x="0" y="5" width="23" height="18" rx="2.5" fill="#f6f6f6"/><rect x="7" y="9" width="4" height="4" fill="#f25022"/><rect x="12" y="9" width="4" height="4" fill="#7fba00"/><rect x="7" y="14" width="4" height="4" fill="#00a4ef"/><rect x="12" y="14" width="4" height="4" fill="#ffb900"/></svg>
<!-- m365 -->
<svg style="left:595px;top:1048px" width="25" height="25" viewBox="0 0 25 25"><path d="M6 0 H14 C16 0 17 1 17.5 3 L21 14 C22 18 20 20 17 20 H9 C7 20 6 19 5.5 17 L1 6 C0 2 2 0 6 0 Z" fill="#3a8ae0"/><path d="M1 6 C0 2 2 0 6 0 H10 L5 16 C4 18 3 18 2.5 16 Z" fill="#2fb36a"/><path d="M17.5 3 L21 14 C22 18 20 20 17 20 H12 L17 4 Z" fill="#b45ce8"/><rect x="5" y="17" width="20" height="8" fill="#111"/><text x="6" y="24" font-size="7.5" fill="#fff" font-family="Liberation Sans" font-weight="700">M365</text></svg>
<!-- chrome -->
<svg style="left:643px;top:1048px" width="27" height="26" viewBox="0 0 27 26"><circle cx="12.5" cy="12.5" r="12" fill="#2da94f"/><path d="M12.5 0.5 A12 12 0 0 1 23 6.5 H12.5 Z M1.5 7.5 A12 12 0 0 1 12.5 0.5 V6.5 L7.5 15 Z" fill="#e33b2e"/><path d="M23 6.5 A12 12 0 0 1 12.5 24.5 L17.5 15 Z" fill="#fbbc04"/><circle cx="12.5" cy="12.5" r="5.5" fill="#fff"/><circle cx="12.5" cy="12.5" r="4.3" fill="#1a73e8"/><circle cx="19.5" cy="18.5" r="6.5" fill="#e8477a"/><text x="16" y="21.5" font-size="8" fill="#fff" font-family="Liberation Sans" font-weight="700">w</text></svg>
<!-- rdp -->
<svg style="left:692px;top:1049px" width="25" height="23" viewBox="0 0 25 23"><rect x="0.5" y="1" width="23" height="14" rx="1" fill="#cfe3f5" stroke="#9ab" stroke-width="1"/><rect x="3" y="3" width="18" height="9" fill="#3a78c8"/><path d="M5 6 H19 M5 9 H19" stroke="#cde" stroke-width="1"/><path d="M8 15 L7 19 H17 L16 15 Z" fill="#bbb"/><ellipse cx="12" cy="20.5" rx="7" ry="2" fill="#ddd"/></svg>
<!-- paint -->
<svg style="left:741px;top:1049px" width="25" height="23" viewBox="0 0 25 23"><path d="M11 2 C4 2 0 7 0.5 12 C1 17 5 21 11 21 C13 21 13 19 12 18 C11 16 12 15 14 15 H17 C20 15 21 13 21 10 C21 5 17 2 11 2 Z" fill="#cfe1f2" stroke="#8aa" stroke-width="0.8"/><circle cx="5.5" cy="10" r="1.8" fill="#e03a2b"/><circle cx="8.5" cy="6" r="1.8" fill="#2f8a4f"/><circle cx="13.5" cy="5.5" r="1.8" fill="#2f6ad0"/><circle cx="6" cy="15" r="1.8" fill="#f0b83c"/><path d="M24 0 L14 16 L12 19 L15 17 L24.5 1 Z" fill="#e8a030" stroke="#a86a20" stroke-width="0.6"/></svg>
<!-- excel active -->
<div class="a" style="left:779px;top:1040px;width:48px;height:40px;background:#5c534c"></div>
<svg style="left:791px;top:1049px" width="25" height="22" viewBox="0 0 25 22"><rect x="6" y="0" width="19" height="22" rx="1.2" fill="#21a366"/><rect x="6" y="11" width="19" height="11" fill="#107c41"/><rect x="0" y="4" width="14" height="14" rx="1.2" fill="#0f6b3b"/><path d="M3.5 7 L10.5 15 M10.5 7 L3.5 15" stroke="#fff" stroke-width="2"/></svg>
<!-- underline indicators -->
<div class="a" style="left:636px;top:1078px;width:40px;height:2px;background:#76b9ed"></div>
<div class="a" style="left:685px;top:1078px;width:40px;height:2px;background:#76b9ed"></div>
<div class="a" style="left:734px;top:1078px;width:40px;height:2px;background:#76b9ed"></div>
<div class="a" style="left:779px;top:1078px;width:48px;height:2px;background:#76b9ed"></div>
<!-- tray -->
<svg style="left:1518px;top:1048px" width="26" height="26" viewBox="0 0 26 26"><circle cx="11" cy="15" r="10" fill="#f29a2e"/><ellipse cx="15" cy="18" rx="7" ry="4" fill="#9fd0f0"/><circle cx="16" cy="6" r="5.5" fill="#e0342a"/><text x="13.7" y="9" font-size="8" fill="#fff" font-family="Liberation Sans" font-weight="700">1</text></svg>
<div class="t" style="left:1549px;top:1053px;font-size:14px;color:#fff">3°C</div>
<div class="t" style="left:1580px;top:1052px;font-size:14px;color:#fff;direction:rtl;unicode-bidi:bidi-override;width:72px;text-align:right"></div>
<div class="t" style="left:1579px;top:1052px;font-size:14px;color:#fff">مشمس غالبًا</div>
<svg style="left:1676px;top:1056px" width="14" height="8" viewBox="0 0 14 8"><path d="M1 7 L7 1 L13 7" fill="none" stroke="#fff" stroke-width="1.2"/></svg>
<svg style="left:1700px;top:1054px" width="17" height="15" viewBox="0 0 17 15"><rect x="0.5" y="1.5" width="14" height="8" fill="none" stroke="#fff" stroke-width="1.1"/><rect x="14.5" y="4" width="2" height="3" fill="#fff"/><rect x="2" y="3" width="4" height="5" fill="#fff"/><circle cx="11.5" cy="10.5" r="4" fill="#1f9d55"/></svg>
<svg style="left:1725px;top:1054px" width="16" height="14" viewBox="0 0 16 14"><path d="M1 6 A12 12 0 0 1 15 3 M3.5 9 A8 8 0 0 1 14 6.5 M6.5 11.5 A4 4 0 0 1 13 10" fill="none" stroke="#fff" stroke-width="1.2"/><circle cx="13" cy="12.5" r="1.2" fill="#fff"/></svg>
<svg style="left:1746px;top:1052px" width="17" height="16" viewBox="0 0 17 16"><path d="M0.5 5 H4 L8.5 1 V15 L4 11 H0.5 Z" fill="none" stroke="#fff" stroke-width="1.1"/><path d="M11 5 A4 4 0 0 1 11 11 M13.5 3 A7 7 0 0 1 13.5 13" fill="none" stroke="#fff" stroke-width="1"/></svg>
<div class="t" style="left:1773px;top:1054px;font-size:13px;color:#fff">ENG</div>
<div class="t" style="left:1812px;top:1044px;font-size:12.5px;color:#fff">7:14 AM</div>
<div class="t" style="left:1808px;top:1063px;font-size:12.5px;color:#fff">2/28/2026</div>
<svg style="left:1879px;top:1050px" width="24" height="24" viewBox="0 0 24 24"><path d="M0.5 0.5 H16.5 V12.5 H6 L2 16 V12.5 H0.5 Z" fill="#fff"/><path d="M3 4 H14 M3 7 H14 M3 10 H10" stroke="#453b32" stroke-width="1"/><circle cx="15.5" cy="16" r="7" fill="#453b32" stroke="#ccc" stroke-width="1.2"/><text x="12.5" y="20.5" font-size="11" fill="#fff" font-family="Liberation Sans">1</text></svg>
<div class="a" style="left:1912px;top:1040px;width:1px;height:40px;background:#888"></div>

<!-- watermark -->
<svg style="left:840px;top:1005px" width="240" height="55" viewBox="840 1005 240 55">
 <g fill="none" stroke="rgba(183,182,179,0.43)" stroke-width="7.5">
  <path d="M848.5 1026 V1045 Q848.5 1053 856.5 1053 H899.5 Q907.5 1053 907.5 1045 V1012 M907.5 1045 Q907.5 1053 915.5 1053 H930 Q938 1053 938 1045 V1027 M938 1045 Q938 1053 946 1053 H969 Q977 1053 977 1045 V1027 M977 1045 Q977 1053 985 1053 H1003"/>
  <path d="M1006 1030.2 A11.3 11.3 0 0 1 1006 1052.8 M1003 1030.4 A11.3 11.3 0 0 0 994 1042"/>
  <path d="M1016 1053 H1069.5 V1040 M1040 1038 A14 14 0 0 1 1069.5 1044"/>
 </g>
 <g fill="rgba(183,182,179,0.43)">
  <path d="M866 1013 L872 1019 L866 1025 L860 1019 Z M881 1013 L887 1019 L881 1025 L875 1019 Z M1052 1011.5 L1058 1017.5 L1052 1023.5 L1046 1017.5 Z"/>
  <path d="M990 1012 H1003 V1018 H997 V1027 L990 1033 Z M1006 1012 H1020 V1019 H1006 Z"/>
 </g>
</svg>

</div>
</body></html>
